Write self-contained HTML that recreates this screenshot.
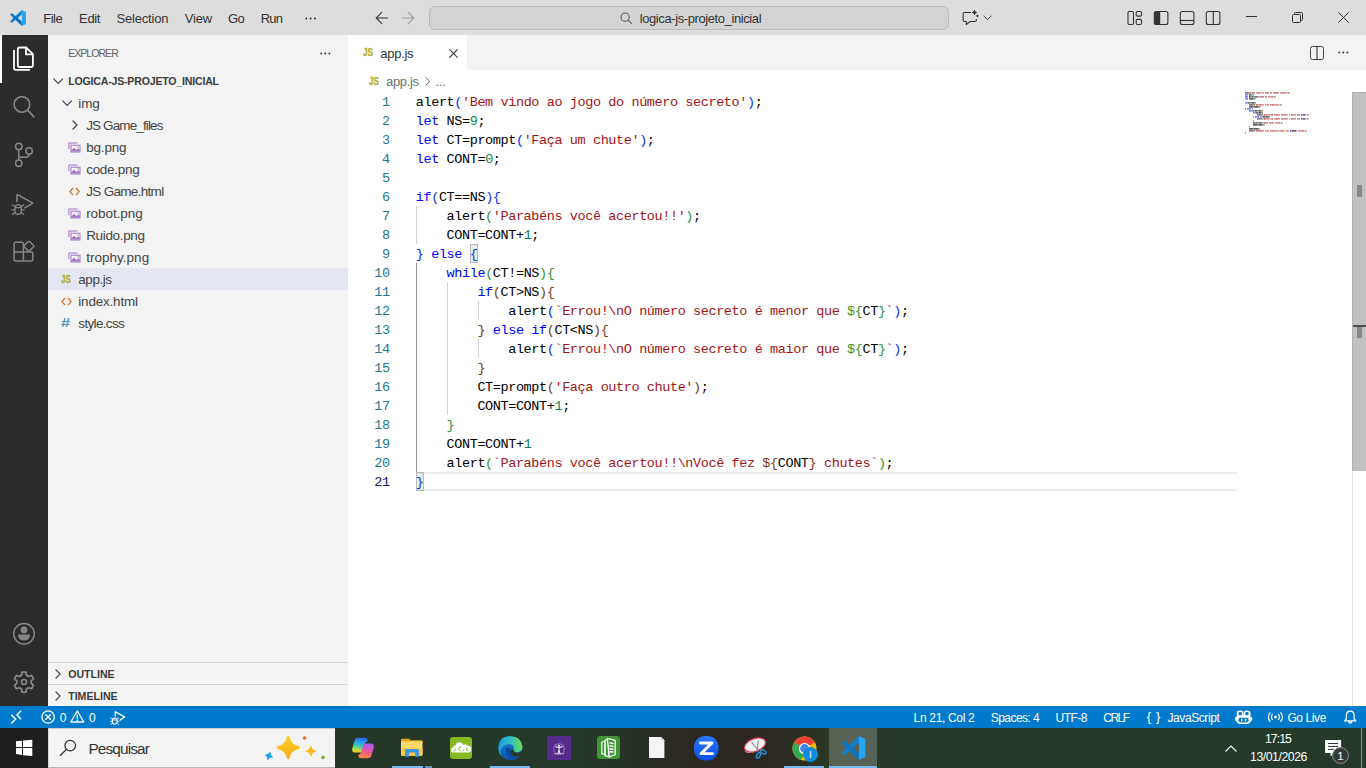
<!DOCTYPE html>
<html lang="pt-BR">
<head>
<meta charset="utf-8">
<title>app.js - logica-js-projeto_inicial - Visual Studio Code</title>
<style>
*{box-sizing:border-box;margin:0;padding:0}
html,body{width:1366px;height:768px;overflow:hidden;background:#fff}
body{position:relative;font-family:"Liberation Sans","DejaVu Sans",sans-serif;font-size:12.5px;color:#333;-webkit-font-smoothing:antialiased}
.abs{position:absolute}
.t{position:absolute;white-space:pre;line-height:20px;height:20px}
#title{left:0;top:0;width:1366px;height:35px;background:#dddddd}
#act{left:0;top:35px;width:48px;height:671px;background:#2c2c2c}
#side{left:48px;top:35px;width:300px;height:671px;background:#f3f3f3}
#tabs{left:348px;top:35px;width:1018px;height:35px;background:#f3f3f3}
#tab{left:348px;top:35px;width:119px;height:35px;background:#fff}
#status{left:0;top:706px;width:1366px;height:22px;background:#007acc}
#task{left:0;top:728px;width:1366px;height:40px;background:linear-gradient(90deg,#25382a 0,#263928 420px,#26382a 590px,#273025 640px,#2b2922 685px,#2d2621 745px,#2b2c22 790px,#2a3a26 835px,#28392a 880px,#263a29 1000px,#253a2b 1366px)}
.cmd{left:429px;top:6px;width:520px;height:24px;border:1px solid #bdbdbd;border-radius:6px;background:#d3d3d3}
.sel{left:48px;top:268px;width:300px;height:22px;background:#e4e6f1}
.hr{left:48px;width:300px;height:1px;background:#d4d4d4}
.code{position:absolute;left:415.8px;white-space:pre;font-family:"Liberation Mono","DejaVu Sans Mono",monospace;font-size:13.5px;letter-spacing:-0.4px;line-height:19px;height:19px;color:#000;margin-top:0.6px}
.ln{position:absolute;left:348px;width:41.6px;text-align:right;font-family:"Liberation Mono","DejaVu Sans Mono",monospace;font-size:13.5px;letter-spacing:-0.4px;line-height:19px;height:19px;color:#237893;margin-top:0.6px}
.k{color:#0000ff}.s{color:#a31515}.n{color:#098658}
.b1{color:#0431fa}.b2{color:#319331}.b3{color:#7b3814}
.g{position:absolute;width:1px;background:#d3d3d3}
.ga{background:#939393}
.bm{position:absolute;width:8px;height:19px;border:1px solid #b9b9b9;background:rgba(0,100,0,0.1)}
svg{position:absolute;overflow:visible}
</style>
</head>
<body>
<div class="abs" id="title"></div>
<div class="abs cmd"></div>
<div class="abs" id="act"></div>
<div class="abs" style="left:0;top:35px;width:2px;height:48px;background:#fff"></div>
<div class="abs" id="side"></div>
<div class="abs sel"></div>
<div class="abs hr" style="top:662px"></div>
<div class="abs hr" style="top:684px"></div>
<div class="abs" id="tabs"></div>
<div class="abs" id="tab"></div>
<div class="abs" style="left:416px;top:472px;width:821px;height:19px;border-top:2px solid #eeeeee;border-bottom:2px solid #eeeeee"></div>
<div class="bm" style="left:469.9px;top:244px"></div>
<div class="bm" style="left:416.0px;top:472px"></div>
<div class="g" style="left:416.0px;top:206px;height:38px"></div>
<div class="g ga" style="left:416.0px;top:263px;height:209px"></div>
<div class="g" style="left:446.8px;top:282px;height:133px"></div>
<div class="g" style="left:477.6px;top:301px;height:19px"></div>
<div class="g" style="left:477.6px;top:339px;height:19px"></div>
<div class="ln" style="top:92px">1</div>
<div class="code" style="top:92px">alert<span class="b1">(</span><span class="s">&#x27;Bem vindo ao jogo do número secreto&#x27;</span><span class="b1">)</span>;</div>
<div class="ln" style="top:111px">2</div>
<div class="code" style="top:111px"><span class="k">let</span> NS=<span class="n">9</span>;</div>
<div class="ln" style="top:130px">3</div>
<div class="code" style="top:130px"><span class="k">let</span> CT=prompt<span class="b1">(</span><span class="s">&#x27;Faça um chute&#x27;</span><span class="b1">)</span>;</div>
<div class="ln" style="top:149px">4</div>
<div class="code" style="top:149px"><span class="k">let</span> CONT=<span class="n">0</span>;</div>
<div class="ln" style="top:168px">5</div>
<div class="ln" style="top:187px">6</div>
<div class="code" style="top:187px"><span class="k">if</span><span class="b1">(</span>CT==NS<span class="b1">)</span><span class="b1">{</span></div>
<div class="ln" style="top:206px">7</div>
<div class="code" style="top:206px">    alert<span class="b2">(</span><span class="s">&#x27;Parabéns você acertou!!&#x27;</span><span class="b2">)</span>;</div>
<div class="ln" style="top:225px">8</div>
<div class="code" style="top:225px">    CONT=CONT+<span class="n">1</span>;</div>
<div class="ln" style="top:244px">9</div>
<div class="code" style="top:244px"><span class="b1">}</span> <span class="k">else</span> <span class="b1">{</span></div>
<div class="ln" style="top:263px">10</div>
<div class="code" style="top:263px">    <span class="k">while</span><span class="b2">(</span>CT!=NS<span class="b2">)</span><span class="b2">{</span></div>
<div class="ln" style="top:282px">11</div>
<div class="code" style="top:282px">        <span class="k">if</span><span class="b3">(</span>CT&gt;NS<span class="b3">)</span><span class="b3">{</span></div>
<div class="ln" style="top:301px">12</div>
<div class="code" style="top:301px">            alert<span class="b1">(</span><span class="s">`Errou!\nO número secreto é menor que </span><span class="b2">${</span>CT<span class="b2">}</span><span class="s">`</span><span class="b1">)</span>;</div>
<div class="ln" style="top:320px">13</div>
<div class="code" style="top:320px">        <span class="b3">}</span> <span class="k">else</span> <span class="k">if</span><span class="b3">(</span>CT&lt;NS<span class="b3">)</span><span class="b3">{</span></div>
<div class="ln" style="top:339px">14</div>
<div class="code" style="top:339px">            alert<span class="b1">(</span><span class="s">`Errou!\nO número secreto é maior que </span><span class="b2">${</span>CT<span class="b2">}</span><span class="s">`</span><span class="b1">)</span>;</div>
<div class="ln" style="top:358px">15</div>
<div class="code" style="top:358px">        <span class="b3">}</span></div>
<div class="ln" style="top:377px">16</div>
<div class="code" style="top:377px">        CT=prompt<span class="b3">(</span><span class="s">&#x27;Faça outro chute&#x27;</span><span class="b3">)</span>;</div>
<div class="ln" style="top:396px">17</div>
<div class="code" style="top:396px">        CONT=CONT+<span class="n">1</span>;</div>
<div class="ln" style="top:415px">18</div>
<div class="code" style="top:415px">    <span class="b2">}</span></div>
<div class="ln" style="top:434px">19</div>
<div class="code" style="top:434px">    CONT=CONT+<span class="n">1</span></div>
<div class="ln" style="top:453px">20</div>
<div class="code" style="top:453px">    alert<span class="b2">(</span><span class="s">`Parabéns você acertou!!\nVocê fez </span><span class="b3">${</span>CONT<span class="b3">}</span><span class="s"> chutes`</span><span class="b2">)</span>;</div>
<div class="ln" style="top:472px;color:#0b216f">21</div>
<div class="code" style="top:472px"><span class="b1">}</span></div>
<svg style="left:1245px;top:92px" width="70" height="44" viewBox="0 0 70 44" shape-rendering="crispEdges"><rect x="0" y="0" width="1" height="1" fill="#000000" opacity="0.56"/><rect x="0" y="1" width="1" height="1" fill="#000000" opacity="0.39"/><rect x="1" y="0" width="1" height="1" fill="#000000" opacity="0.44"/><rect x="1" y="1" width="1" height="1" fill="#000000" opacity="0.30"/><rect x="2" y="0" width="1" height="1" fill="#000000" opacity="0.56"/><rect x="2" y="1" width="1" height="1" fill="#000000" opacity="0.39"/><rect x="3" y="0" width="1" height="1" fill="#000000" opacity="0.44"/><rect x="3" y="1" width="1" height="1" fill="#000000" opacity="0.30"/><rect x="4" y="0" width="1" height="1" fill="#000000" opacity="0.44"/><rect x="4" y="1" width="1" height="1" fill="#000000" opacity="0.30"/><rect x="5" y="0" width="1" height="1" fill="#000000" opacity="0.40"/><rect x="5" y="1" width="1" height="1" fill="#000000" opacity="0.28"/><rect x="6" y="0" width="1" height="1" fill="#a31515" opacity="0.24"/><rect x="6" y="1" width="1" height="1" fill="#a31515" opacity="0.17"/><rect x="7" y="0" width="1" height="1" fill="#a31515" opacity="0.68"/><rect x="7" y="1" width="1" height="1" fill="#a31515" opacity="0.47"/><rect x="8" y="0" width="1" height="1" fill="#a31515" opacity="0.56"/><rect x="8" y="1" width="1" height="1" fill="#a31515" opacity="0.39"/><rect x="9" y="0" width="1" height="1" fill="#a31515" opacity="0.56"/><rect x="9" y="1" width="1" height="1" fill="#a31515" opacity="0.39"/><rect x="11" y="0" width="1" height="1" fill="#a31515" opacity="0.44"/><rect x="11" y="1" width="1" height="1" fill="#a31515" opacity="0.30"/><rect x="12" y="0" width="1" height="1" fill="#a31515" opacity="0.44"/><rect x="12" y="1" width="1" height="1" fill="#a31515" opacity="0.30"/><rect x="13" y="0" width="1" height="1" fill="#a31515" opacity="0.44"/><rect x="13" y="1" width="1" height="1" fill="#a31515" opacity="0.30"/><rect x="14" y="0" width="1" height="1" fill="#a31515" opacity="0.56"/><rect x="14" y="1" width="1" height="1" fill="#a31515" opacity="0.39"/><rect x="15" y="0" width="1" height="1" fill="#a31515" opacity="0.44"/><rect x="15" y="1" width="1" height="1" fill="#a31515" opacity="0.30"/><rect x="17" y="0" width="1" height="1" fill="#a31515" opacity="0.56"/><rect x="17" y="1" width="1" height="1" fill="#a31515" opacity="0.39"/><rect x="18" y="0" width="1" height="1" fill="#a31515" opacity="0.44"/><rect x="18" y="1" width="1" height="1" fill="#a31515" opacity="0.30"/><rect x="20" y="0" width="1" height="1" fill="#a31515" opacity="0.44"/><rect x="20" y="1" width="1" height="1" fill="#a31515" opacity="0.30"/><rect x="21" y="0" width="1" height="1" fill="#a31515" opacity="0.44"/><rect x="21" y="1" width="1" height="1" fill="#a31515" opacity="0.30"/><rect x="22" y="0" width="1" height="1" fill="#a31515" opacity="0.56"/><rect x="22" y="1" width="1" height="1" fill="#a31515" opacity="0.39"/><rect x="23" y="0" width="1" height="1" fill="#a31515" opacity="0.44"/><rect x="23" y="1" width="1" height="1" fill="#a31515" opacity="0.30"/><rect x="25" y="0" width="1" height="1" fill="#a31515" opacity="0.56"/><rect x="25" y="1" width="1" height="1" fill="#a31515" opacity="0.39"/><rect x="26" y="0" width="1" height="1" fill="#a31515" opacity="0.44"/><rect x="26" y="1" width="1" height="1" fill="#a31515" opacity="0.30"/><rect x="28" y="0" width="1" height="1" fill="#a31515" opacity="0.44"/><rect x="28" y="1" width="1" height="1" fill="#a31515" opacity="0.30"/><rect x="29" y="0" width="1" height="1" fill="#a31515" opacity="0.44"/><rect x="29" y="1" width="1" height="1" fill="#a31515" opacity="0.30"/><rect x="30" y="0" width="1" height="1" fill="#a31515" opacity="0.56"/><rect x="30" y="1" width="1" height="1" fill="#a31515" opacity="0.39"/><rect x="31" y="0" width="1" height="1" fill="#a31515" opacity="0.56"/><rect x="31" y="1" width="1" height="1" fill="#a31515" opacity="0.39"/><rect x="32" y="0" width="1" height="1" fill="#a31515" opacity="0.44"/><rect x="32" y="1" width="1" height="1" fill="#a31515" opacity="0.30"/><rect x="33" y="0" width="1" height="1" fill="#a31515" opacity="0.44"/><rect x="33" y="1" width="1" height="1" fill="#a31515" opacity="0.30"/><rect x="35" y="0" width="1" height="1" fill="#a31515" opacity="0.44"/><rect x="35" y="1" width="1" height="1" fill="#a31515" opacity="0.30"/><rect x="36" y="0" width="1" height="1" fill="#a31515" opacity="0.56"/><rect x="36" y="1" width="1" height="1" fill="#a31515" opacity="0.39"/><rect x="37" y="0" width="1" height="1" fill="#a31515" opacity="0.44"/><rect x="37" y="1" width="1" height="1" fill="#a31515" opacity="0.30"/><rect x="38" y="0" width="1" height="1" fill="#a31515" opacity="0.44"/><rect x="38" y="1" width="1" height="1" fill="#a31515" opacity="0.30"/><rect x="39" y="0" width="1" height="1" fill="#a31515" opacity="0.56"/><rect x="39" y="1" width="1" height="1" fill="#a31515" opacity="0.39"/><rect x="40" y="0" width="1" height="1" fill="#a31515" opacity="0.44"/><rect x="40" y="1" width="1" height="1" fill="#a31515" opacity="0.30"/><rect x="41" y="0" width="1" height="1" fill="#a31515" opacity="0.44"/><rect x="41" y="1" width="1" height="1" fill="#a31515" opacity="0.30"/><rect x="42" y="0" width="1" height="1" fill="#a31515" opacity="0.24"/><rect x="42" y="1" width="1" height="1" fill="#a31515" opacity="0.17"/><rect x="43" y="0" width="1" height="1" fill="#000000" opacity="0.40"/><rect x="43" y="1" width="1" height="1" fill="#000000" opacity="0.28"/><rect x="44" y="0" width="1" height="1" fill="#000000" opacity="0.24"/><rect x="44" y="1" width="1" height="1" fill="#000000" opacity="0.17"/><rect x="0" y="2" width="1" height="1" fill="#0000ff" opacity="0.44"/><rect x="0" y="3" width="1" height="1" fill="#0000ff" opacity="0.30"/><rect x="1" y="2" width="1" height="1" fill="#0000ff" opacity="0.56"/><rect x="1" y="3" width="1" height="1" fill="#0000ff" opacity="0.39"/><rect x="2" y="2" width="1" height="1" fill="#0000ff" opacity="0.44"/><rect x="2" y="3" width="1" height="1" fill="#0000ff" opacity="0.30"/><rect x="4" y="2" width="1" height="1" fill="#000000" opacity="0.68"/><rect x="4" y="3" width="1" height="1" fill="#000000" opacity="0.47"/><rect x="5" y="2" width="1" height="1" fill="#000000" opacity="0.60"/><rect x="5" y="3" width="1" height="1" fill="#000000" opacity="0.41"/><rect x="6" y="2" width="1" height="1" fill="#000000" opacity="0.40"/><rect x="6" y="3" width="1" height="1" fill="#000000" opacity="0.28"/><rect x="7" y="2" width="1" height="1" fill="#098658" opacity="0.60"/><rect x="7" y="3" width="1" height="1" fill="#098658" opacity="0.41"/><rect x="8" y="2" width="1" height="1" fill="#000000" opacity="0.24"/><rect x="8" y="3" width="1" height="1" fill="#000000" opacity="0.17"/><rect x="0" y="4" width="1" height="1" fill="#0000ff" opacity="0.44"/><rect x="0" y="5" width="1" height="1" fill="#0000ff" opacity="0.30"/><rect x="1" y="4" width="1" height="1" fill="#0000ff" opacity="0.56"/><rect x="1" y="5" width="1" height="1" fill="#0000ff" opacity="0.39"/><rect x="2" y="4" width="1" height="1" fill="#0000ff" opacity="0.44"/><rect x="2" y="5" width="1" height="1" fill="#0000ff" opacity="0.30"/><rect x="4" y="4" width="1" height="1" fill="#000000" opacity="0.60"/><rect x="4" y="5" width="1" height="1" fill="#000000" opacity="0.41"/><rect x="5" y="4" width="1" height="1" fill="#000000" opacity="0.60"/><rect x="5" y="5" width="1" height="1" fill="#000000" opacity="0.41"/><rect x="6" y="4" width="1" height="1" fill="#000000" opacity="0.40"/><rect x="6" y="5" width="1" height="1" fill="#000000" opacity="0.28"/><rect x="7" y="4" width="1" height="1" fill="#000000" opacity="0.56"/><rect x="7" y="5" width="1" height="1" fill="#000000" opacity="0.39"/><rect x="8" y="4" width="1" height="1" fill="#000000" opacity="0.44"/><rect x="8" y="5" width="1" height="1" fill="#000000" opacity="0.30"/><rect x="9" y="4" width="1" height="1" fill="#000000" opacity="0.44"/><rect x="9" y="5" width="1" height="1" fill="#000000" opacity="0.30"/><rect x="10" y="4" width="1" height="1" fill="#000000" opacity="0.56"/><rect x="10" y="5" width="1" height="1" fill="#000000" opacity="0.39"/><rect x="11" y="4" width="1" height="1" fill="#000000" opacity="0.56"/><rect x="11" y="5" width="1" height="1" fill="#000000" opacity="0.39"/><rect x="12" y="4" width="1" height="1" fill="#000000" opacity="0.44"/><rect x="12" y="5" width="1" height="1" fill="#000000" opacity="0.30"/><rect x="13" y="4" width="1" height="1" fill="#000000" opacity="0.40"/><rect x="13" y="5" width="1" height="1" fill="#000000" opacity="0.28"/><rect x="14" y="4" width="1" height="1" fill="#a31515" opacity="0.24"/><rect x="14" y="5" width="1" height="1" fill="#a31515" opacity="0.17"/><rect x="15" y="4" width="1" height="1" fill="#a31515" opacity="0.60"/><rect x="15" y="5" width="1" height="1" fill="#a31515" opacity="0.41"/><rect x="16" y="4" width="1" height="1" fill="#a31515" opacity="0.56"/><rect x="16" y="5" width="1" height="1" fill="#a31515" opacity="0.39"/><rect x="17" y="4" width="1" height="1" fill="#a31515" opacity="0.44"/><rect x="17" y="5" width="1" height="1" fill="#a31515" opacity="0.30"/><rect x="18" y="4" width="1" height="1" fill="#a31515" opacity="0.56"/><rect x="18" y="5" width="1" height="1" fill="#a31515" opacity="0.39"/><rect x="20" y="4" width="1" height="1" fill="#a31515" opacity="0.44"/><rect x="20" y="5" width="1" height="1" fill="#a31515" opacity="0.30"/><rect x="21" y="4" width="1" height="1" fill="#a31515" opacity="0.56"/><rect x="21" y="5" width="1" height="1" fill="#a31515" opacity="0.39"/><rect x="23" y="4" width="1" height="1" fill="#a31515" opacity="0.44"/><rect x="23" y="5" width="1" height="1" fill="#a31515" opacity="0.30"/><rect x="24" y="4" width="1" height="1" fill="#a31515" opacity="0.44"/><rect x="24" y="5" width="1" height="1" fill="#a31515" opacity="0.30"/><rect x="25" y="4" width="1" height="1" fill="#a31515" opacity="0.44"/><rect x="25" y="5" width="1" height="1" fill="#a31515" opacity="0.30"/><rect x="26" y="4" width="1" height="1" fill="#a31515" opacity="0.44"/><rect x="26" y="5" width="1" height="1" fill="#a31515" opacity="0.30"/><rect x="27" y="4" width="1" height="1" fill="#a31515" opacity="0.56"/><rect x="27" y="5" width="1" height="1" fill="#a31515" opacity="0.39"/><rect x="28" y="4" width="1" height="1" fill="#a31515" opacity="0.24"/><rect x="28" y="5" width="1" height="1" fill="#a31515" opacity="0.17"/><rect x="29" y="4" width="1" height="1" fill="#000000" opacity="0.40"/><rect x="29" y="5" width="1" height="1" fill="#000000" opacity="0.28"/><rect x="30" y="4" width="1" height="1" fill="#000000" opacity="0.24"/><rect x="30" y="5" width="1" height="1" fill="#000000" opacity="0.17"/><rect x="0" y="6" width="1" height="1" fill="#0000ff" opacity="0.44"/><rect x="0" y="7" width="1" height="1" fill="#0000ff" opacity="0.30"/><rect x="1" y="6" width="1" height="1" fill="#0000ff" opacity="0.56"/><rect x="1" y="7" width="1" height="1" fill="#0000ff" opacity="0.39"/><rect x="2" y="6" width="1" height="1" fill="#0000ff" opacity="0.44"/><rect x="2" y="7" width="1" height="1" fill="#0000ff" opacity="0.30"/><rect x="4" y="6" width="1" height="1" fill="#000000" opacity="0.60"/><rect x="4" y="7" width="1" height="1" fill="#000000" opacity="0.41"/><rect x="5" y="6" width="1" height="1" fill="#000000" opacity="0.60"/><rect x="5" y="7" width="1" height="1" fill="#000000" opacity="0.41"/><rect x="6" y="6" width="1" height="1" fill="#000000" opacity="0.68"/><rect x="6" y="7" width="1" height="1" fill="#000000" opacity="0.47"/><rect x="7" y="6" width="1" height="1" fill="#000000" opacity="0.60"/><rect x="7" y="7" width="1" height="1" fill="#000000" opacity="0.41"/><rect x="8" y="6" width="1" height="1" fill="#000000" opacity="0.40"/><rect x="8" y="7" width="1" height="1" fill="#000000" opacity="0.28"/><rect x="9" y="6" width="1" height="1" fill="#098658" opacity="0.68"/><rect x="9" y="7" width="1" height="1" fill="#098658" opacity="0.47"/><rect x="10" y="6" width="1" height="1" fill="#000000" opacity="0.24"/><rect x="10" y="7" width="1" height="1" fill="#000000" opacity="0.17"/><rect x="0" y="10" width="1" height="1" fill="#0000ff" opacity="0.44"/><rect x="0" y="11" width="1" height="1" fill="#0000ff" opacity="0.30"/><rect x="1" y="10" width="1" height="1" fill="#0000ff" opacity="0.44"/><rect x="1" y="11" width="1" height="1" fill="#0000ff" opacity="0.30"/><rect x="2" y="10" width="1" height="1" fill="#000000" opacity="0.40"/><rect x="2" y="11" width="1" height="1" fill="#000000" opacity="0.28"/><rect x="3" y="10" width="1" height="1" fill="#000000" opacity="0.60"/><rect x="3" y="11" width="1" height="1" fill="#000000" opacity="0.41"/><rect x="4" y="10" width="1" height="1" fill="#000000" opacity="0.60"/><rect x="4" y="11" width="1" height="1" fill="#000000" opacity="0.41"/><rect x="5" y="10" width="1" height="1" fill="#000000" opacity="0.40"/><rect x="5" y="11" width="1" height="1" fill="#000000" opacity="0.28"/><rect x="6" y="10" width="1" height="1" fill="#000000" opacity="0.40"/><rect x="6" y="11" width="1" height="1" fill="#000000" opacity="0.28"/><rect x="7" y="10" width="1" height="1" fill="#000000" opacity="0.68"/><rect x="7" y="11" width="1" height="1" fill="#000000" opacity="0.47"/><rect x="8" y="10" width="1" height="1" fill="#000000" opacity="0.60"/><rect x="8" y="11" width="1" height="1" fill="#000000" opacity="0.41"/><rect x="9" y="10" width="1" height="1" fill="#000000" opacity="0.40"/><rect x="9" y="11" width="1" height="1" fill="#000000" opacity="0.28"/><rect x="10" y="10" width="1" height="1" fill="#000000" opacity="0.40"/><rect x="10" y="11" width="1" height="1" fill="#000000" opacity="0.28"/><rect x="4" y="12" width="1" height="1" fill="#000000" opacity="0.56"/><rect x="4" y="13" width="1" height="1" fill="#000000" opacity="0.39"/><rect x="5" y="12" width="1" height="1" fill="#000000" opacity="0.44"/><rect x="5" y="13" width="1" height="1" fill="#000000" opacity="0.30"/><rect x="6" y="12" width="1" height="1" fill="#000000" opacity="0.56"/><rect x="6" y="13" width="1" height="1" fill="#000000" opacity="0.39"/><rect x="7" y="12" width="1" height="1" fill="#000000" opacity="0.44"/><rect x="7" y="13" width="1" height="1" fill="#000000" opacity="0.30"/><rect x="8" y="12" width="1" height="1" fill="#000000" opacity="0.44"/><rect x="8" y="13" width="1" height="1" fill="#000000" opacity="0.30"/><rect x="9" y="12" width="1" height="1" fill="#000000" opacity="0.40"/><rect x="9" y="13" width="1" height="1" fill="#000000" opacity="0.28"/><rect x="10" y="12" width="1" height="1" fill="#a31515" opacity="0.24"/><rect x="10" y="13" width="1" height="1" fill="#a31515" opacity="0.17"/><rect x="11" y="12" width="1" height="1" fill="#a31515" opacity="0.60"/><rect x="11" y="13" width="1" height="1" fill="#a31515" opacity="0.41"/><rect x="12" y="12" width="1" height="1" fill="#a31515" opacity="0.56"/><rect x="12" y="13" width="1" height="1" fill="#a31515" opacity="0.39"/><rect x="13" y="12" width="1" height="1" fill="#a31515" opacity="0.44"/><rect x="13" y="13" width="1" height="1" fill="#a31515" opacity="0.30"/><rect x="14" y="12" width="1" height="1" fill="#a31515" opacity="0.56"/><rect x="14" y="13" width="1" height="1" fill="#a31515" opacity="0.39"/><rect x="15" y="12" width="1" height="1" fill="#a31515" opacity="0.56"/><rect x="15" y="13" width="1" height="1" fill="#a31515" opacity="0.39"/><rect x="16" y="12" width="1" height="1" fill="#a31515" opacity="0.44"/><rect x="16" y="13" width="1" height="1" fill="#a31515" opacity="0.30"/><rect x="17" y="12" width="1" height="1" fill="#a31515" opacity="0.44"/><rect x="17" y="13" width="1" height="1" fill="#a31515" opacity="0.30"/><rect x="18" y="12" width="1" height="1" fill="#a31515" opacity="0.44"/><rect x="18" y="13" width="1" height="1" fill="#a31515" opacity="0.30"/><rect x="20" y="12" width="1" height="1" fill="#a31515" opacity="0.44"/><rect x="20" y="13" width="1" height="1" fill="#a31515" opacity="0.30"/><rect x="21" y="12" width="1" height="1" fill="#a31515" opacity="0.44"/><rect x="21" y="13" width="1" height="1" fill="#a31515" opacity="0.30"/><rect x="22" y="12" width="1" height="1" fill="#a31515" opacity="0.44"/><rect x="22" y="13" width="1" height="1" fill="#a31515" opacity="0.30"/><rect x="23" y="12" width="1" height="1" fill="#a31515" opacity="0.44"/><rect x="23" y="13" width="1" height="1" fill="#a31515" opacity="0.30"/><rect x="25" y="12" width="1" height="1" fill="#a31515" opacity="0.56"/><rect x="25" y="13" width="1" height="1" fill="#a31515" opacity="0.39"/><rect x="26" y="12" width="1" height="1" fill="#a31515" opacity="0.44"/><rect x="26" y="13" width="1" height="1" fill="#a31515" opacity="0.30"/><rect x="27" y="12" width="1" height="1" fill="#a31515" opacity="0.56"/><rect x="27" y="13" width="1" height="1" fill="#a31515" opacity="0.39"/><rect x="28" y="12" width="1" height="1" fill="#a31515" opacity="0.44"/><rect x="28" y="13" width="1" height="1" fill="#a31515" opacity="0.30"/><rect x="29" y="12" width="1" height="1" fill="#a31515" opacity="0.44"/><rect x="29" y="13" width="1" height="1" fill="#a31515" opacity="0.30"/><rect x="30" y="12" width="1" height="1" fill="#a31515" opacity="0.44"/><rect x="30" y="13" width="1" height="1" fill="#a31515" opacity="0.30"/><rect x="31" y="12" width="1" height="1" fill="#a31515" opacity="0.44"/><rect x="31" y="13" width="1" height="1" fill="#a31515" opacity="0.30"/><rect x="32" y="12" width="1" height="1" fill="#a31515" opacity="0.40"/><rect x="32" y="13" width="1" height="1" fill="#a31515" opacity="0.28"/><rect x="33" y="12" width="1" height="1" fill="#a31515" opacity="0.40"/><rect x="33" y="13" width="1" height="1" fill="#a31515" opacity="0.28"/><rect x="34" y="12" width="1" height="1" fill="#a31515" opacity="0.24"/><rect x="34" y="13" width="1" height="1" fill="#a31515" opacity="0.17"/><rect x="35" y="12" width="1" height="1" fill="#000000" opacity="0.40"/><rect x="35" y="13" width="1" height="1" fill="#000000" opacity="0.28"/><rect x="36" y="12" width="1" height="1" fill="#000000" opacity="0.24"/><rect x="36" y="13" width="1" height="1" fill="#000000" opacity="0.17"/><rect x="4" y="14" width="1" height="1" fill="#000000" opacity="0.60"/><rect x="4" y="15" width="1" height="1" fill="#000000" opacity="0.41"/><rect x="5" y="14" width="1" height="1" fill="#000000" opacity="0.60"/><rect x="5" y="15" width="1" height="1" fill="#000000" opacity="0.41"/><rect x="6" y="14" width="1" height="1" fill="#000000" opacity="0.68"/><rect x="6" y="15" width="1" height="1" fill="#000000" opacity="0.47"/><rect x="7" y="14" width="1" height="1" fill="#000000" opacity="0.60"/><rect x="7" y="15" width="1" height="1" fill="#000000" opacity="0.41"/><rect x="8" y="14" width="1" height="1" fill="#000000" opacity="0.40"/><rect x="8" y="15" width="1" height="1" fill="#000000" opacity="0.28"/><rect x="9" y="14" width="1" height="1" fill="#000000" opacity="0.60"/><rect x="9" y="15" width="1" height="1" fill="#000000" opacity="0.41"/><rect x="10" y="14" width="1" height="1" fill="#000000" opacity="0.60"/><rect x="10" y="15" width="1" height="1" fill="#000000" opacity="0.41"/><rect x="11" y="14" width="1" height="1" fill="#000000" opacity="0.68"/><rect x="11" y="15" width="1" height="1" fill="#000000" opacity="0.47"/><rect x="12" y="14" width="1" height="1" fill="#000000" opacity="0.60"/><rect x="12" y="15" width="1" height="1" fill="#000000" opacity="0.41"/><rect x="13" y="14" width="1" height="1" fill="#000000" opacity="0.40"/><rect x="13" y="15" width="1" height="1" fill="#000000" opacity="0.28"/><rect x="14" y="14" width="1" height="1" fill="#098658" opacity="0.60"/><rect x="14" y="15" width="1" height="1" fill="#098658" opacity="0.41"/><rect x="15" y="14" width="1" height="1" fill="#000000" opacity="0.24"/><rect x="15" y="15" width="1" height="1" fill="#000000" opacity="0.17"/><rect x="0" y="16" width="1" height="1" fill="#000000" opacity="0.40"/><rect x="0" y="17" width="1" height="1" fill="#000000" opacity="0.28"/><rect x="2" y="16" width="1" height="1" fill="#0000ff" opacity="0.56"/><rect x="2" y="17" width="1" height="1" fill="#0000ff" opacity="0.39"/><rect x="3" y="16" width="1" height="1" fill="#0000ff" opacity="0.44"/><rect x="3" y="17" width="1" height="1" fill="#0000ff" opacity="0.30"/><rect x="4" y="16" width="1" height="1" fill="#0000ff" opacity="0.44"/><rect x="4" y="17" width="1" height="1" fill="#0000ff" opacity="0.30"/><rect x="5" y="16" width="1" height="1" fill="#0000ff" opacity="0.56"/><rect x="5" y="17" width="1" height="1" fill="#0000ff" opacity="0.39"/><rect x="7" y="16" width="1" height="1" fill="#000000" opacity="0.40"/><rect x="7" y="17" width="1" height="1" fill="#000000" opacity="0.28"/><rect x="4" y="18" width="1" height="1" fill="#0000ff" opacity="0.56"/><rect x="4" y="19" width="1" height="1" fill="#0000ff" opacity="0.39"/><rect x="5" y="18" width="1" height="1" fill="#0000ff" opacity="0.44"/><rect x="5" y="19" width="1" height="1" fill="#0000ff" opacity="0.30"/><rect x="6" y="18" width="1" height="1" fill="#0000ff" opacity="0.44"/><rect x="6" y="19" width="1" height="1" fill="#0000ff" opacity="0.30"/><rect x="7" y="18" width="1" height="1" fill="#0000ff" opacity="0.44"/><rect x="7" y="19" width="1" height="1" fill="#0000ff" opacity="0.30"/><rect x="8" y="18" width="1" height="1" fill="#0000ff" opacity="0.56"/><rect x="8" y="19" width="1" height="1" fill="#0000ff" opacity="0.39"/><rect x="9" y="18" width="1" height="1" fill="#000000" opacity="0.40"/><rect x="9" y="19" width="1" height="1" fill="#000000" opacity="0.28"/><rect x="10" y="18" width="1" height="1" fill="#000000" opacity="0.60"/><rect x="10" y="19" width="1" height="1" fill="#000000" opacity="0.41"/><rect x="11" y="18" width="1" height="1" fill="#000000" opacity="0.60"/><rect x="11" y="19" width="1" height="1" fill="#000000" opacity="0.41"/><rect x="12" y="18" width="1" height="1" fill="#000000" opacity="0.40"/><rect x="12" y="19" width="1" height="1" fill="#000000" opacity="0.28"/><rect x="13" y="18" width="1" height="1" fill="#000000" opacity="0.40"/><rect x="13" y="19" width="1" height="1" fill="#000000" opacity="0.28"/><rect x="14" y="18" width="1" height="1" fill="#000000" opacity="0.68"/><rect x="14" y="19" width="1" height="1" fill="#000000" opacity="0.47"/><rect x="15" y="18" width="1" height="1" fill="#000000" opacity="0.60"/><rect x="15" y="19" width="1" height="1" fill="#000000" opacity="0.41"/><rect x="16" y="18" width="1" height="1" fill="#000000" opacity="0.40"/><rect x="16" y="19" width="1" height="1" fill="#000000" opacity="0.28"/><rect x="17" y="18" width="1" height="1" fill="#000000" opacity="0.40"/><rect x="17" y="19" width="1" height="1" fill="#000000" opacity="0.28"/><rect x="8" y="20" width="1" height="1" fill="#0000ff" opacity="0.44"/><rect x="8" y="21" width="1" height="1" fill="#0000ff" opacity="0.30"/><rect x="9" y="20" width="1" height="1" fill="#0000ff" opacity="0.44"/><rect x="9" y="21" width="1" height="1" fill="#0000ff" opacity="0.30"/><rect x="10" y="20" width="1" height="1" fill="#000000" opacity="0.40"/><rect x="10" y="21" width="1" height="1" fill="#000000" opacity="0.28"/><rect x="11" y="20" width="1" height="1" fill="#000000" opacity="0.60"/><rect x="11" y="21" width="1" height="1" fill="#000000" opacity="0.41"/><rect x="12" y="20" width="1" height="1" fill="#000000" opacity="0.60"/><rect x="12" y="21" width="1" height="1" fill="#000000" opacity="0.41"/><rect x="13" y="20" width="1" height="1" fill="#000000" opacity="0.40"/><rect x="13" y="21" width="1" height="1" fill="#000000" opacity="0.28"/><rect x="14" y="20" width="1" height="1" fill="#000000" opacity="0.68"/><rect x="14" y="21" width="1" height="1" fill="#000000" opacity="0.47"/><rect x="15" y="20" width="1" height="1" fill="#000000" opacity="0.60"/><rect x="15" y="21" width="1" height="1" fill="#000000" opacity="0.41"/><rect x="16" y="20" width="1" height="1" fill="#000000" opacity="0.40"/><rect x="16" y="21" width="1" height="1" fill="#000000" opacity="0.28"/><rect x="17" y="20" width="1" height="1" fill="#000000" opacity="0.40"/><rect x="17" y="21" width="1" height="1" fill="#000000" opacity="0.28"/><rect x="12" y="22" width="1" height="1" fill="#000000" opacity="0.56"/><rect x="12" y="23" width="1" height="1" fill="#000000" opacity="0.39"/><rect x="13" y="22" width="1" height="1" fill="#000000" opacity="0.44"/><rect x="13" y="23" width="1" height="1" fill="#000000" opacity="0.30"/><rect x="14" y="22" width="1" height="1" fill="#000000" opacity="0.56"/><rect x="14" y="23" width="1" height="1" fill="#000000" opacity="0.39"/><rect x="15" y="22" width="1" height="1" fill="#000000" opacity="0.44"/><rect x="15" y="23" width="1" height="1" fill="#000000" opacity="0.30"/><rect x="16" y="22" width="1" height="1" fill="#000000" opacity="0.44"/><rect x="16" y="23" width="1" height="1" fill="#000000" opacity="0.30"/><rect x="17" y="22" width="1" height="1" fill="#000000" opacity="0.40"/><rect x="17" y="23" width="1" height="1" fill="#000000" opacity="0.28"/><rect x="18" y="22" width="1" height="1" fill="#a31515" opacity="0.24"/><rect x="18" y="23" width="1" height="1" fill="#a31515" opacity="0.17"/><rect x="19" y="22" width="1" height="1" fill="#a31515" opacity="0.68"/><rect x="19" y="23" width="1" height="1" fill="#a31515" opacity="0.47"/><rect x="20" y="22" width="1" height="1" fill="#a31515" opacity="0.44"/><rect x="20" y="23" width="1" height="1" fill="#a31515" opacity="0.30"/><rect x="21" y="22" width="1" height="1" fill="#a31515" opacity="0.44"/><rect x="21" y="23" width="1" height="1" fill="#a31515" opacity="0.30"/><rect x="22" y="22" width="1" height="1" fill="#a31515" opacity="0.44"/><rect x="22" y="23" width="1" height="1" fill="#a31515" opacity="0.30"/><rect x="23" y="22" width="1" height="1" fill="#a31515" opacity="0.44"/><rect x="23" y="23" width="1" height="1" fill="#a31515" opacity="0.30"/><rect x="24" y="22" width="1" height="1" fill="#a31515" opacity="0.40"/><rect x="24" y="23" width="1" height="1" fill="#a31515" opacity="0.28"/><rect x="25" y="22" width="1" height="1" fill="#a31515" opacity="0.24"/><rect x="25" y="23" width="1" height="1" fill="#a31515" opacity="0.17"/><rect x="26" y="22" width="1" height="1" fill="#a31515" opacity="0.44"/><rect x="26" y="23" width="1" height="1" fill="#a31515" opacity="0.30"/><rect x="27" y="22" width="1" height="1" fill="#a31515" opacity="0.60"/><rect x="27" y="23" width="1" height="1" fill="#a31515" opacity="0.41"/><rect x="29" y="22" width="1" height="1" fill="#a31515" opacity="0.44"/><rect x="29" y="23" width="1" height="1" fill="#a31515" opacity="0.30"/><rect x="30" y="22" width="1" height="1" fill="#a31515" opacity="0.44"/><rect x="30" y="23" width="1" height="1" fill="#a31515" opacity="0.30"/><rect x="31" y="22" width="1" height="1" fill="#a31515" opacity="0.56"/><rect x="31" y="23" width="1" height="1" fill="#a31515" opacity="0.39"/><rect x="32" y="22" width="1" height="1" fill="#a31515" opacity="0.56"/><rect x="32" y="23" width="1" height="1" fill="#a31515" opacity="0.39"/><rect x="33" y="22" width="1" height="1" fill="#a31515" opacity="0.44"/><rect x="33" y="23" width="1" height="1" fill="#a31515" opacity="0.30"/><rect x="34" y="22" width="1" height="1" fill="#a31515" opacity="0.44"/><rect x="34" y="23" width="1" height="1" fill="#a31515" opacity="0.30"/><rect x="36" y="22" width="1" height="1" fill="#a31515" opacity="0.44"/><rect x="36" y="23" width="1" height="1" fill="#a31515" opacity="0.30"/><rect x="37" y="22" width="1" height="1" fill="#a31515" opacity="0.56"/><rect x="37" y="23" width="1" height="1" fill="#a31515" opacity="0.39"/><rect x="38" y="22" width="1" height="1" fill="#a31515" opacity="0.44"/><rect x="38" y="23" width="1" height="1" fill="#a31515" opacity="0.30"/><rect x="39" y="22" width="1" height="1" fill="#a31515" opacity="0.44"/><rect x="39" y="23" width="1" height="1" fill="#a31515" opacity="0.30"/><rect x="40" y="22" width="1" height="1" fill="#a31515" opacity="0.56"/><rect x="40" y="23" width="1" height="1" fill="#a31515" opacity="0.39"/><rect x="41" y="22" width="1" height="1" fill="#a31515" opacity="0.44"/><rect x="41" y="23" width="1" height="1" fill="#a31515" opacity="0.30"/><rect x="42" y="22" width="1" height="1" fill="#a31515" opacity="0.44"/><rect x="42" y="23" width="1" height="1" fill="#a31515" opacity="0.30"/><rect x="44" y="22" width="1" height="1" fill="#a31515" opacity="0.44"/><rect x="44" y="23" width="1" height="1" fill="#a31515" opacity="0.30"/><rect x="46" y="22" width="1" height="1" fill="#a31515" opacity="0.56"/><rect x="46" y="23" width="1" height="1" fill="#a31515" opacity="0.39"/><rect x="47" y="22" width="1" height="1" fill="#a31515" opacity="0.56"/><rect x="47" y="23" width="1" height="1" fill="#a31515" opacity="0.39"/><rect x="48" y="22" width="1" height="1" fill="#a31515" opacity="0.44"/><rect x="48" y="23" width="1" height="1" fill="#a31515" opacity="0.30"/><rect x="49" y="22" width="1" height="1" fill="#a31515" opacity="0.44"/><rect x="49" y="23" width="1" height="1" fill="#a31515" opacity="0.30"/><rect x="50" y="22" width="1" height="1" fill="#a31515" opacity="0.44"/><rect x="50" y="23" width="1" height="1" fill="#a31515" opacity="0.30"/><rect x="52" y="22" width="1" height="1" fill="#a31515" opacity="0.56"/><rect x="52" y="23" width="1" height="1" fill="#a31515" opacity="0.39"/><rect x="53" y="22" width="1" height="1" fill="#a31515" opacity="0.44"/><rect x="53" y="23" width="1" height="1" fill="#a31515" opacity="0.30"/><rect x="54" y="22" width="1" height="1" fill="#a31515" opacity="0.56"/><rect x="54" y="23" width="1" height="1" fill="#a31515" opacity="0.39"/><rect x="56" y="22" width="1" height="1" fill="#0000ff" opacity="0.68"/><rect x="56" y="23" width="1" height="1" fill="#0000ff" opacity="0.47"/><rect x="57" y="22" width="1" height="1" fill="#0000ff" opacity="0.40"/><rect x="57" y="23" width="1" height="1" fill="#0000ff" opacity="0.28"/><rect x="58" y="22" width="1" height="1" fill="#000000" opacity="0.60"/><rect x="58" y="23" width="1" height="1" fill="#000000" opacity="0.41"/><rect x="59" y="22" width="1" height="1" fill="#000000" opacity="0.60"/><rect x="59" y="23" width="1" height="1" fill="#000000" opacity="0.41"/><rect x="60" y="22" width="1" height="1" fill="#0000ff" opacity="0.40"/><rect x="60" y="23" width="1" height="1" fill="#0000ff" opacity="0.28"/><rect x="61" y="22" width="1" height="1" fill="#a31515" opacity="0.24"/><rect x="61" y="23" width="1" height="1" fill="#a31515" opacity="0.17"/><rect x="62" y="22" width="1" height="1" fill="#000000" opacity="0.40"/><rect x="62" y="23" width="1" height="1" fill="#000000" opacity="0.28"/><rect x="63" y="22" width="1" height="1" fill="#000000" opacity="0.24"/><rect x="63" y="23" width="1" height="1" fill="#000000" opacity="0.17"/><rect x="8" y="24" width="1" height="1" fill="#000000" opacity="0.40"/><rect x="8" y="25" width="1" height="1" fill="#000000" opacity="0.28"/><rect x="10" y="24" width="1" height="1" fill="#0000ff" opacity="0.56"/><rect x="10" y="25" width="1" height="1" fill="#0000ff" opacity="0.39"/><rect x="11" y="24" width="1" height="1" fill="#0000ff" opacity="0.44"/><rect x="11" y="25" width="1" height="1" fill="#0000ff" opacity="0.30"/><rect x="12" y="24" width="1" height="1" fill="#0000ff" opacity="0.44"/><rect x="12" y="25" width="1" height="1" fill="#0000ff" opacity="0.30"/><rect x="13" y="24" width="1" height="1" fill="#0000ff" opacity="0.56"/><rect x="13" y="25" width="1" height="1" fill="#0000ff" opacity="0.39"/><rect x="15" y="24" width="1" height="1" fill="#0000ff" opacity="0.44"/><rect x="15" y="25" width="1" height="1" fill="#0000ff" opacity="0.30"/><rect x="16" y="24" width="1" height="1" fill="#0000ff" opacity="0.44"/><rect x="16" y="25" width="1" height="1" fill="#0000ff" opacity="0.30"/><rect x="17" y="24" width="1" height="1" fill="#000000" opacity="0.40"/><rect x="17" y="25" width="1" height="1" fill="#000000" opacity="0.28"/><rect x="18" y="24" width="1" height="1" fill="#000000" opacity="0.60"/><rect x="18" y="25" width="1" height="1" fill="#000000" opacity="0.41"/><rect x="19" y="24" width="1" height="1" fill="#000000" opacity="0.60"/><rect x="19" y="25" width="1" height="1" fill="#000000" opacity="0.41"/><rect x="20" y="24" width="1" height="1" fill="#000000" opacity="0.40"/><rect x="20" y="25" width="1" height="1" fill="#000000" opacity="0.28"/><rect x="21" y="24" width="1" height="1" fill="#000000" opacity="0.68"/><rect x="21" y="25" width="1" height="1" fill="#000000" opacity="0.47"/><rect x="22" y="24" width="1" height="1" fill="#000000" opacity="0.60"/><rect x="22" y="25" width="1" height="1" fill="#000000" opacity="0.41"/><rect x="23" y="24" width="1" height="1" fill="#000000" opacity="0.40"/><rect x="23" y="25" width="1" height="1" fill="#000000" opacity="0.28"/><rect x="24" y="24" width="1" height="1" fill="#000000" opacity="0.40"/><rect x="24" y="25" width="1" height="1" fill="#000000" opacity="0.28"/><rect x="12" y="26" width="1" height="1" fill="#000000" opacity="0.56"/><rect x="12" y="27" width="1" height="1" fill="#000000" opacity="0.39"/><rect x="13" y="26" width="1" height="1" fill="#000000" opacity="0.44"/><rect x="13" y="27" width="1" height="1" fill="#000000" opacity="0.30"/><rect x="14" y="26" width="1" height="1" fill="#000000" opacity="0.56"/><rect x="14" y="27" width="1" height="1" fill="#000000" opacity="0.39"/><rect x="15" y="26" width="1" height="1" fill="#000000" opacity="0.44"/><rect x="15" y="27" width="1" height="1" fill="#000000" opacity="0.30"/><rect x="16" y="26" width="1" height="1" fill="#000000" opacity="0.44"/><rect x="16" y="27" width="1" height="1" fill="#000000" opacity="0.30"/><rect x="17" y="26" width="1" height="1" fill="#000000" opacity="0.40"/><rect x="17" y="27" width="1" height="1" fill="#000000" opacity="0.28"/><rect x="18" y="26" width="1" height="1" fill="#a31515" opacity="0.24"/><rect x="18" y="27" width="1" height="1" fill="#a31515" opacity="0.17"/><rect x="19" y="26" width="1" height="1" fill="#a31515" opacity="0.68"/><rect x="19" y="27" width="1" height="1" fill="#a31515" opacity="0.47"/><rect x="20" y="26" width="1" height="1" fill="#a31515" opacity="0.44"/><rect x="20" y="27" width="1" height="1" fill="#a31515" opacity="0.30"/><rect x="21" y="26" width="1" height="1" fill="#a31515" opacity="0.44"/><rect x="21" y="27" width="1" height="1" fill="#a31515" opacity="0.30"/><rect x="22" y="26" width="1" height="1" fill="#a31515" opacity="0.44"/><rect x="22" y="27" width="1" height="1" fill="#a31515" opacity="0.30"/><rect x="23" y="26" width="1" height="1" fill="#a31515" opacity="0.44"/><rect x="23" y="27" width="1" height="1" fill="#a31515" opacity="0.30"/><rect x="24" y="26" width="1" height="1" fill="#a31515" opacity="0.40"/><rect x="24" y="27" width="1" height="1" fill="#a31515" opacity="0.28"/><rect x="25" y="26" width="1" height="1" fill="#a31515" opacity="0.24"/><rect x="25" y="27" width="1" height="1" fill="#a31515" opacity="0.17"/><rect x="26" y="26" width="1" height="1" fill="#a31515" opacity="0.44"/><rect x="26" y="27" width="1" height="1" fill="#a31515" opacity="0.30"/><rect x="27" y="26" width="1" height="1" fill="#a31515" opacity="0.60"/><rect x="27" y="27" width="1" height="1" fill="#a31515" opacity="0.41"/><rect x="29" y="26" width="1" height="1" fill="#a31515" opacity="0.44"/><rect x="29" y="27" width="1" height="1" fill="#a31515" opacity="0.30"/><rect x="30" y="26" width="1" height="1" fill="#a31515" opacity="0.44"/><rect x="30" y="27" width="1" height="1" fill="#a31515" opacity="0.30"/><rect x="31" y="26" width="1" height="1" fill="#a31515" opacity="0.56"/><rect x="31" y="27" width="1" height="1" fill="#a31515" opacity="0.39"/><rect x="32" y="26" width="1" height="1" fill="#a31515" opacity="0.56"/><rect x="32" y="27" width="1" height="1" fill="#a31515" opacity="0.39"/><rect x="33" y="26" width="1" height="1" fill="#a31515" opacity="0.44"/><rect x="33" y="27" width="1" height="1" fill="#a31515" opacity="0.30"/><rect x="34" y="26" width="1" height="1" fill="#a31515" opacity="0.44"/><rect x="34" y="27" width="1" height="1" fill="#a31515" opacity="0.30"/><rect x="36" y="26" width="1" height="1" fill="#a31515" opacity="0.44"/><rect x="36" y="27" width="1" height="1" fill="#a31515" opacity="0.30"/><rect x="37" y="26" width="1" height="1" fill="#a31515" opacity="0.56"/><rect x="37" y="27" width="1" height="1" fill="#a31515" opacity="0.39"/><rect x="38" y="26" width="1" height="1" fill="#a31515" opacity="0.44"/><rect x="38" y="27" width="1" height="1" fill="#a31515" opacity="0.30"/><rect x="39" y="26" width="1" height="1" fill="#a31515" opacity="0.44"/><rect x="39" y="27" width="1" height="1" fill="#a31515" opacity="0.30"/><rect x="40" y="26" width="1" height="1" fill="#a31515" opacity="0.56"/><rect x="40" y="27" width="1" height="1" fill="#a31515" opacity="0.39"/><rect x="41" y="26" width="1" height="1" fill="#a31515" opacity="0.44"/><rect x="41" y="27" width="1" height="1" fill="#a31515" opacity="0.30"/><rect x="42" y="26" width="1" height="1" fill="#a31515" opacity="0.44"/><rect x="42" y="27" width="1" height="1" fill="#a31515" opacity="0.30"/><rect x="44" y="26" width="1" height="1" fill="#a31515" opacity="0.44"/><rect x="44" y="27" width="1" height="1" fill="#a31515" opacity="0.30"/><rect x="46" y="26" width="1" height="1" fill="#a31515" opacity="0.56"/><rect x="46" y="27" width="1" height="1" fill="#a31515" opacity="0.39"/><rect x="47" y="26" width="1" height="1" fill="#a31515" opacity="0.56"/><rect x="47" y="27" width="1" height="1" fill="#a31515" opacity="0.39"/><rect x="48" y="26" width="1" height="1" fill="#a31515" opacity="0.44"/><rect x="48" y="27" width="1" height="1" fill="#a31515" opacity="0.30"/><rect x="49" y="26" width="1" height="1" fill="#a31515" opacity="0.44"/><rect x="49" y="27" width="1" height="1" fill="#a31515" opacity="0.30"/><rect x="50" y="26" width="1" height="1" fill="#a31515" opacity="0.44"/><rect x="50" y="27" width="1" height="1" fill="#a31515" opacity="0.30"/><rect x="52" y="26" width="1" height="1" fill="#a31515" opacity="0.56"/><rect x="52" y="27" width="1" height="1" fill="#a31515" opacity="0.39"/><rect x="53" y="26" width="1" height="1" fill="#a31515" opacity="0.44"/><rect x="53" y="27" width="1" height="1" fill="#a31515" opacity="0.30"/><rect x="54" y="26" width="1" height="1" fill="#a31515" opacity="0.56"/><rect x="54" y="27" width="1" height="1" fill="#a31515" opacity="0.39"/><rect x="56" y="26" width="1" height="1" fill="#0000ff" opacity="0.68"/><rect x="56" y="27" width="1" height="1" fill="#0000ff" opacity="0.47"/><rect x="57" y="26" width="1" height="1" fill="#0000ff" opacity="0.40"/><rect x="57" y="27" width="1" height="1" fill="#0000ff" opacity="0.28"/><rect x="58" y="26" width="1" height="1" fill="#000000" opacity="0.60"/><rect x="58" y="27" width="1" height="1" fill="#000000" opacity="0.41"/><rect x="59" y="26" width="1" height="1" fill="#000000" opacity="0.60"/><rect x="59" y="27" width="1" height="1" fill="#000000" opacity="0.41"/><rect x="60" y="26" width="1" height="1" fill="#0000ff" opacity="0.40"/><rect x="60" y="27" width="1" height="1" fill="#0000ff" opacity="0.28"/><rect x="61" y="26" width="1" height="1" fill="#a31515" opacity="0.24"/><rect x="61" y="27" width="1" height="1" fill="#a31515" opacity="0.17"/><rect x="62" y="26" width="1" height="1" fill="#000000" opacity="0.40"/><rect x="62" y="27" width="1" height="1" fill="#000000" opacity="0.28"/><rect x="63" y="26" width="1" height="1" fill="#000000" opacity="0.24"/><rect x="63" y="27" width="1" height="1" fill="#000000" opacity="0.17"/><rect x="8" y="28" width="1" height="1" fill="#000000" opacity="0.40"/><rect x="8" y="29" width="1" height="1" fill="#000000" opacity="0.28"/><rect x="8" y="30" width="1" height="1" fill="#000000" opacity="0.60"/><rect x="8" y="31" width="1" height="1" fill="#000000" opacity="0.41"/><rect x="9" y="30" width="1" height="1" fill="#000000" opacity="0.60"/><rect x="9" y="31" width="1" height="1" fill="#000000" opacity="0.41"/><rect x="10" y="30" width="1" height="1" fill="#000000" opacity="0.40"/><rect x="10" y="31" width="1" height="1" fill="#000000" opacity="0.28"/><rect x="11" y="30" width="1" height="1" fill="#000000" opacity="0.56"/><rect x="11" y="31" width="1" height="1" fill="#000000" opacity="0.39"/><rect x="12" y="30" width="1" height="1" fill="#000000" opacity="0.44"/><rect x="12" y="31" width="1" height="1" fill="#000000" opacity="0.30"/><rect x="13" y="30" width="1" height="1" fill="#000000" opacity="0.44"/><rect x="13" y="31" width="1" height="1" fill="#000000" opacity="0.30"/><rect x="14" y="30" width="1" height="1" fill="#000000" opacity="0.56"/><rect x="14" y="31" width="1" height="1" fill="#000000" opacity="0.39"/><rect x="15" y="30" width="1" height="1" fill="#000000" opacity="0.56"/><rect x="15" y="31" width="1" height="1" fill="#000000" opacity="0.39"/><rect x="16" y="30" width="1" height="1" fill="#000000" opacity="0.44"/><rect x="16" y="31" width="1" height="1" fill="#000000" opacity="0.30"/><rect x="17" y="30" width="1" height="1" fill="#000000" opacity="0.40"/><rect x="17" y="31" width="1" height="1" fill="#000000" opacity="0.28"/><rect x="18" y="30" width="1" height="1" fill="#a31515" opacity="0.24"/><rect x="18" y="31" width="1" height="1" fill="#a31515" opacity="0.17"/><rect x="19" y="30" width="1" height="1" fill="#a31515" opacity="0.60"/><rect x="19" y="31" width="1" height="1" fill="#a31515" opacity="0.41"/><rect x="20" y="30" width="1" height="1" fill="#a31515" opacity="0.56"/><rect x="20" y="31" width="1" height="1" fill="#a31515" opacity="0.39"/><rect x="21" y="30" width="1" height="1" fill="#a31515" opacity="0.44"/><rect x="21" y="31" width="1" height="1" fill="#a31515" opacity="0.30"/><rect x="22" y="30" width="1" height="1" fill="#a31515" opacity="0.56"/><rect x="22" y="31" width="1" height="1" fill="#a31515" opacity="0.39"/><rect x="24" y="30" width="1" height="1" fill="#a31515" opacity="0.44"/><rect x="24" y="31" width="1" height="1" fill="#a31515" opacity="0.30"/><rect x="25" y="30" width="1" height="1" fill="#a31515" opacity="0.44"/><rect x="25" y="31" width="1" height="1" fill="#a31515" opacity="0.30"/><rect x="26" y="30" width="1" height="1" fill="#a31515" opacity="0.44"/><rect x="26" y="31" width="1" height="1" fill="#a31515" opacity="0.30"/><rect x="27" y="30" width="1" height="1" fill="#a31515" opacity="0.44"/><rect x="27" y="31" width="1" height="1" fill="#a31515" opacity="0.30"/><rect x="28" y="30" width="1" height="1" fill="#a31515" opacity="0.44"/><rect x="28" y="31" width="1" height="1" fill="#a31515" opacity="0.30"/><rect x="30" y="30" width="1" height="1" fill="#a31515" opacity="0.44"/><rect x="30" y="31" width="1" height="1" fill="#a31515" opacity="0.30"/><rect x="31" y="30" width="1" height="1" fill="#a31515" opacity="0.44"/><rect x="31" y="31" width="1" height="1" fill="#a31515" opacity="0.30"/><rect x="32" y="30" width="1" height="1" fill="#a31515" opacity="0.44"/><rect x="32" y="31" width="1" height="1" fill="#a31515" opacity="0.30"/><rect x="33" y="30" width="1" height="1" fill="#a31515" opacity="0.44"/><rect x="33" y="31" width="1" height="1" fill="#a31515" opacity="0.30"/><rect x="34" y="30" width="1" height="1" fill="#a31515" opacity="0.56"/><rect x="34" y="31" width="1" height="1" fill="#a31515" opacity="0.39"/><rect x="35" y="30" width="1" height="1" fill="#a31515" opacity="0.24"/><rect x="35" y="31" width="1" height="1" fill="#a31515" opacity="0.17"/><rect x="36" y="30" width="1" height="1" fill="#000000" opacity="0.40"/><rect x="36" y="31" width="1" height="1" fill="#000000" opacity="0.28"/><rect x="37" y="30" width="1" height="1" fill="#000000" opacity="0.24"/><rect x="37" y="31" width="1" height="1" fill="#000000" opacity="0.17"/><rect x="8" y="32" width="1" height="1" fill="#000000" opacity="0.60"/><rect x="8" y="33" width="1" height="1" fill="#000000" opacity="0.41"/><rect x="9" y="32" width="1" height="1" fill="#000000" opacity="0.60"/><rect x="9" y="33" width="1" height="1" fill="#000000" opacity="0.41"/><rect x="10" y="32" width="1" height="1" fill="#000000" opacity="0.68"/><rect x="10" y="33" width="1" height="1" fill="#000000" opacity="0.47"/><rect x="11" y="32" width="1" height="1" fill="#000000" opacity="0.60"/><rect x="11" y="33" width="1" height="1" fill="#000000" opacity="0.41"/><rect x="12" y="32" width="1" height="1" fill="#000000" opacity="0.40"/><rect x="12" y="33" width="1" height="1" fill="#000000" opacity="0.28"/><rect x="13" y="32" width="1" height="1" fill="#000000" opacity="0.60"/><rect x="13" y="33" width="1" height="1" fill="#000000" opacity="0.41"/><rect x="14" y="32" width="1" height="1" fill="#000000" opacity="0.60"/><rect x="14" y="33" width="1" height="1" fill="#000000" opacity="0.41"/><rect x="15" y="32" width="1" height="1" fill="#000000" opacity="0.68"/><rect x="15" y="33" width="1" height="1" fill="#000000" opacity="0.47"/><rect x="16" y="32" width="1" height="1" fill="#000000" opacity="0.60"/><rect x="16" y="33" width="1" height="1" fill="#000000" opacity="0.41"/><rect x="17" y="32" width="1" height="1" fill="#000000" opacity="0.40"/><rect x="17" y="33" width="1" height="1" fill="#000000" opacity="0.28"/><rect x="18" y="32" width="1" height="1" fill="#098658" opacity="0.60"/><rect x="18" y="33" width="1" height="1" fill="#098658" opacity="0.41"/><rect x="19" y="32" width="1" height="1" fill="#000000" opacity="0.24"/><rect x="19" y="33" width="1" height="1" fill="#000000" opacity="0.17"/><rect x="4" y="34" width="1" height="1" fill="#000000" opacity="0.40"/><rect x="4" y="35" width="1" height="1" fill="#000000" opacity="0.28"/><rect x="4" y="36" width="1" height="1" fill="#000000" opacity="0.60"/><rect x="4" y="37" width="1" height="1" fill="#000000" opacity="0.41"/><rect x="5" y="36" width="1" height="1" fill="#000000" opacity="0.60"/><rect x="5" y="37" width="1" height="1" fill="#000000" opacity="0.41"/><rect x="6" y="36" width="1" height="1" fill="#000000" opacity="0.68"/><rect x="6" y="37" width="1" height="1" fill="#000000" opacity="0.47"/><rect x="7" y="36" width="1" height="1" fill="#000000" opacity="0.60"/><rect x="7" y="37" width="1" height="1" fill="#000000" opacity="0.41"/><rect x="8" y="36" width="1" height="1" fill="#000000" opacity="0.40"/><rect x="8" y="37" width="1" height="1" fill="#000000" opacity="0.28"/><rect x="9" y="36" width="1" height="1" fill="#000000" opacity="0.60"/><rect x="9" y="37" width="1" height="1" fill="#000000" opacity="0.41"/><rect x="10" y="36" width="1" height="1" fill="#000000" opacity="0.60"/><rect x="10" y="37" width="1" height="1" fill="#000000" opacity="0.41"/><rect x="11" y="36" width="1" height="1" fill="#000000" opacity="0.68"/><rect x="11" y="37" width="1" height="1" fill="#000000" opacity="0.47"/><rect x="12" y="36" width="1" height="1" fill="#000000" opacity="0.60"/><rect x="12" y="37" width="1" height="1" fill="#000000" opacity="0.41"/><rect x="13" y="36" width="1" height="1" fill="#000000" opacity="0.40"/><rect x="13" y="37" width="1" height="1" fill="#000000" opacity="0.28"/><rect x="14" y="36" width="1" height="1" fill="#098658" opacity="0.60"/><rect x="14" y="37" width="1" height="1" fill="#098658" opacity="0.41"/><rect x="4" y="38" width="1" height="1" fill="#000000" opacity="0.56"/><rect x="4" y="39" width="1" height="1" fill="#000000" opacity="0.39"/><rect x="5" y="38" width="1" height="1" fill="#000000" opacity="0.44"/><rect x="5" y="39" width="1" height="1" fill="#000000" opacity="0.30"/><rect x="6" y="38" width="1" height="1" fill="#000000" opacity="0.56"/><rect x="6" y="39" width="1" height="1" fill="#000000" opacity="0.39"/><rect x="7" y="38" width="1" height="1" fill="#000000" opacity="0.44"/><rect x="7" y="39" width="1" height="1" fill="#000000" opacity="0.30"/><rect x="8" y="38" width="1" height="1" fill="#000000" opacity="0.44"/><rect x="8" y="39" width="1" height="1" fill="#000000" opacity="0.30"/><rect x="9" y="38" width="1" height="1" fill="#000000" opacity="0.40"/><rect x="9" y="39" width="1" height="1" fill="#000000" opacity="0.28"/><rect x="10" y="38" width="1" height="1" fill="#a31515" opacity="0.24"/><rect x="10" y="39" width="1" height="1" fill="#a31515" opacity="0.17"/><rect x="11" y="38" width="1" height="1" fill="#a31515" opacity="0.60"/><rect x="11" y="39" width="1" height="1" fill="#a31515" opacity="0.41"/><rect x="12" y="38" width="1" height="1" fill="#a31515" opacity="0.56"/><rect x="12" y="39" width="1" height="1" fill="#a31515" opacity="0.39"/><rect x="13" y="38" width="1" height="1" fill="#a31515" opacity="0.44"/><rect x="13" y="39" width="1" height="1" fill="#a31515" opacity="0.30"/><rect x="14" y="38" width="1" height="1" fill="#a31515" opacity="0.56"/><rect x="14" y="39" width="1" height="1" fill="#a31515" opacity="0.39"/><rect x="15" y="38" width="1" height="1" fill="#a31515" opacity="0.56"/><rect x="15" y="39" width="1" height="1" fill="#a31515" opacity="0.39"/><rect x="16" y="38" width="1" height="1" fill="#a31515" opacity="0.44"/><rect x="16" y="39" width="1" height="1" fill="#a31515" opacity="0.30"/><rect x="17" y="38" width="1" height="1" fill="#a31515" opacity="0.44"/><rect x="17" y="39" width="1" height="1" fill="#a31515" opacity="0.30"/><rect x="18" y="38" width="1" height="1" fill="#a31515" opacity="0.44"/><rect x="18" y="39" width="1" height="1" fill="#a31515" opacity="0.30"/><rect x="20" y="38" width="1" height="1" fill="#a31515" opacity="0.44"/><rect x="20" y="39" width="1" height="1" fill="#a31515" opacity="0.30"/><rect x="21" y="38" width="1" height="1" fill="#a31515" opacity="0.44"/><rect x="21" y="39" width="1" height="1" fill="#a31515" opacity="0.30"/><rect x="22" y="38" width="1" height="1" fill="#a31515" opacity="0.44"/><rect x="22" y="39" width="1" height="1" fill="#a31515" opacity="0.30"/><rect x="23" y="38" width="1" height="1" fill="#a31515" opacity="0.44"/><rect x="23" y="39" width="1" height="1" fill="#a31515" opacity="0.30"/><rect x="25" y="38" width="1" height="1" fill="#a31515" opacity="0.56"/><rect x="25" y="39" width="1" height="1" fill="#a31515" opacity="0.39"/><rect x="26" y="38" width="1" height="1" fill="#a31515" opacity="0.44"/><rect x="26" y="39" width="1" height="1" fill="#a31515" opacity="0.30"/><rect x="27" y="38" width="1" height="1" fill="#a31515" opacity="0.56"/><rect x="27" y="39" width="1" height="1" fill="#a31515" opacity="0.39"/><rect x="28" y="38" width="1" height="1" fill="#a31515" opacity="0.44"/><rect x="28" y="39" width="1" height="1" fill="#a31515" opacity="0.30"/><rect x="29" y="38" width="1" height="1" fill="#a31515" opacity="0.44"/><rect x="29" y="39" width="1" height="1" fill="#a31515" opacity="0.30"/><rect x="30" y="38" width="1" height="1" fill="#a31515" opacity="0.44"/><rect x="30" y="39" width="1" height="1" fill="#a31515" opacity="0.30"/><rect x="31" y="38" width="1" height="1" fill="#a31515" opacity="0.44"/><rect x="31" y="39" width="1" height="1" fill="#a31515" opacity="0.30"/><rect x="32" y="38" width="1" height="1" fill="#a31515" opacity="0.40"/><rect x="32" y="39" width="1" height="1" fill="#a31515" opacity="0.28"/><rect x="33" y="38" width="1" height="1" fill="#a31515" opacity="0.40"/><rect x="33" y="39" width="1" height="1" fill="#a31515" opacity="0.28"/><rect x="34" y="38" width="1" height="1" fill="#a31515" opacity="0.24"/><rect x="34" y="39" width="1" height="1" fill="#a31515" opacity="0.17"/><rect x="35" y="38" width="1" height="1" fill="#a31515" opacity="0.44"/><rect x="35" y="39" width="1" height="1" fill="#a31515" opacity="0.30"/><rect x="36" y="38" width="1" height="1" fill="#a31515" opacity="0.60"/><rect x="36" y="39" width="1" height="1" fill="#a31515" opacity="0.41"/><rect x="37" y="38" width="1" height="1" fill="#a31515" opacity="0.44"/><rect x="37" y="39" width="1" height="1" fill="#a31515" opacity="0.30"/><rect x="38" y="38" width="1" height="1" fill="#a31515" opacity="0.44"/><rect x="38" y="39" width="1" height="1" fill="#a31515" opacity="0.30"/><rect x="39" y="38" width="1" height="1" fill="#a31515" opacity="0.44"/><rect x="39" y="39" width="1" height="1" fill="#a31515" opacity="0.30"/><rect x="41" y="38" width="1" height="1" fill="#a31515" opacity="0.44"/><rect x="41" y="39" width="1" height="1" fill="#a31515" opacity="0.30"/><rect x="42" y="38" width="1" height="1" fill="#a31515" opacity="0.56"/><rect x="42" y="39" width="1" height="1" fill="#a31515" opacity="0.39"/><rect x="43" y="38" width="1" height="1" fill="#a31515" opacity="0.44"/><rect x="43" y="39" width="1" height="1" fill="#a31515" opacity="0.30"/><rect x="45" y="38" width="1" height="1" fill="#0000ff" opacity="0.68"/><rect x="45" y="39" width="1" height="1" fill="#0000ff" opacity="0.47"/><rect x="46" y="38" width="1" height="1" fill="#0000ff" opacity="0.40"/><rect x="46" y="39" width="1" height="1" fill="#0000ff" opacity="0.28"/><rect x="47" y="38" width="1" height="1" fill="#000000" opacity="0.60"/><rect x="47" y="39" width="1" height="1" fill="#000000" opacity="0.41"/><rect x="48" y="38" width="1" height="1" fill="#000000" opacity="0.60"/><rect x="48" y="39" width="1" height="1" fill="#000000" opacity="0.41"/><rect x="49" y="38" width="1" height="1" fill="#000000" opacity="0.68"/><rect x="49" y="39" width="1" height="1" fill="#000000" opacity="0.47"/><rect x="50" y="38" width="1" height="1" fill="#000000" opacity="0.60"/><rect x="50" y="39" width="1" height="1" fill="#000000" opacity="0.41"/><rect x="51" y="38" width="1" height="1" fill="#0000ff" opacity="0.40"/><rect x="51" y="39" width="1" height="1" fill="#0000ff" opacity="0.28"/><rect x="53" y="38" width="1" height="1" fill="#a31515" opacity="0.44"/><rect x="53" y="39" width="1" height="1" fill="#a31515" opacity="0.30"/><rect x="54" y="38" width="1" height="1" fill="#a31515" opacity="0.44"/><rect x="54" y="39" width="1" height="1" fill="#a31515" opacity="0.30"/><rect x="55" y="38" width="1" height="1" fill="#a31515" opacity="0.44"/><rect x="55" y="39" width="1" height="1" fill="#a31515" opacity="0.30"/><rect x="56" y="38" width="1" height="1" fill="#a31515" opacity="0.44"/><rect x="56" y="39" width="1" height="1" fill="#a31515" opacity="0.30"/><rect x="57" y="38" width="1" height="1" fill="#a31515" opacity="0.56"/><rect x="57" y="39" width="1" height="1" fill="#a31515" opacity="0.39"/><rect x="58" y="38" width="1" height="1" fill="#a31515" opacity="0.44"/><rect x="58" y="39" width="1" height="1" fill="#a31515" opacity="0.30"/><rect x="59" y="38" width="1" height="1" fill="#a31515" opacity="0.24"/><rect x="59" y="39" width="1" height="1" fill="#a31515" opacity="0.17"/><rect x="60" y="38" width="1" height="1" fill="#000000" opacity="0.40"/><rect x="60" y="39" width="1" height="1" fill="#000000" opacity="0.28"/><rect x="61" y="38" width="1" height="1" fill="#000000" opacity="0.24"/><rect x="61" y="39" width="1" height="1" fill="#000000" opacity="0.17"/><rect x="0" y="40" width="1" height="1" fill="#000000" opacity="0.40"/><rect x="0" y="41" width="1" height="1" fill="#000000" opacity="0.28"/></svg>
<div class="abs" style="left:1352px;top:92px;width:1px;height:614px;background:#e4e4e4"></div>
<div class="abs" style="left:1352px;top:92px;width:14px;height:379px;background:#c1c1c1;border-left:1px solid #b0b0b0;border-top:1px solid #b0b0b0"></div>
<div class="abs" style="left:1357px;top:185px;width:5px;height:12px;background:#888888"></div>
<div class="abs" style="left:1357px;top:327px;width:5px;height:11px;background:#888888"></div>
<div class="abs" style="left:1353px;top:325px;width:13px;height:2px;background:#505050"></div>
<div class="abs" id="status"></div>
<div class="abs" id="task"></div>
<div class="abs" style="left:0px;top:728px;width:48px;height:40px;background:#1c1e20;"></div>
<svg style="left:0;top:728px" width="48" height="40" viewBox="0 728 48 40"><path d="M16 741.2L22 740.700V746.900H16ZM23 740.600L32.300 739.800V746.900H23ZM16 748H22V754.900L16 754.100ZM23 748H32.300V756.100L23 755.200Z" fill="#fff"/></svg>
<div class="abs" style="left:48px;top:728px;width:287.4px;height:40px;background:#f3f3f3;border-bottom:1px solid #b5b5b5;border-left:1px solid #d8d8d8;border-top:1px solid #d0d0d0"></div>
<svg style="left:59px;top:738.7px" width="18" height="18" viewBox="0 0 18 18" ><circle cx="11.2" cy="6.600" r="5.300" fill="none" stroke="#2b2b2b" stroke-width="1.150"/><path d="M7.400 10.400L1 16.800" stroke="#2b2b2b" stroke-width="1.300"/></svg>
<svg style="left:0;top:0" width="1366" height="768" viewBox="0 0 1366 768"><defs><linearGradient id="gy" x1="0" y1="0" x2="0" y2="1"><stop offset="0" stop-color="#ffd02c"/><stop offset="1" stop-color="#f8ac18"/></linearGradient></defs><path d="M288.2 737.3Q289.88 745.82 298.4 747.5Q289.88 749.18 288.2 757.7Q286.52 749.18 278.0 747.5Q286.52 745.82 288.2 737.3Z" fill="url(#gy)" stroke="url(#gy)" stroke-width="2.86" stroke-linejoin="round"/><path d="M310.8 746.6Q311.56 750.44 315.40000000000003 751.2Q311.56 751.96 310.8 755.8000000000001Q310.04 751.96 306.2 751.2Q310.04 750.44 310.8 746.6Z" fill="#fbbd1e" stroke="#fbbd1e" stroke-width="1.29" stroke-linejoin="round"/><g transform="rotate(18 269 756)"><path d="M269 752.4Q269.59 755.41 272.6 756Q269.59 756.59 269 759.6Q268.41 756.59 265.4 756Q268.41 755.41 269 752.4Z" fill="#16a3ee" stroke="#16a3ee" stroke-width="1.01" stroke-linejoin="round"/></g><circle cx="304.6" cy="738" r="1.8" fill="#ee6a2c"/><circle cx="323" cy="757.4" r="1.8" fill="#7cbb2e"/></svg>
<svg style="left:351px;top:736px" width="24" height="24" viewBox="0 0 24 24" ><defs><linearGradient id="cp1" x1="0.3" y1="0" x2="0.1" y2="1"><stop offset="0" stop-color="#2370e8"/><stop offset="0.3" stop-color="#2fa9e6"/><stop offset="0.55" stop-color="#4ccf9c"/><stop offset="0.8" stop-color="#c9dc3c"/><stop offset="1" stop-color="#f7c52c"/></linearGradient><linearGradient id="cp2" x1="0.7" y1="0" x2="0.4" y2="1"><stop offset="0" stop-color="#a65cf2"/><stop offset="0.35" stop-color="#d655c6"/><stop offset="0.65" stop-color="#f2607d"/><stop offset="1" stop-color="#fb8a3a"/></linearGradient></defs><path d="M7.200 1.700H13.600Q16.400 1.700 16.600 4.200L16.700 5.400Q14.700 5.400 14 7.600L11.600 15.200Q11 16.600 9.400 16.600H5Q0.300 16.600 1.300 12.400L3.600 4.500Q4.400 1.700 7.200 1.700Z" fill="url(#cp1)"/><path d="M16.800 22.300H10.400Q7.600 22.300 7.400 19.800L7.300 18.600Q9.300 18.600 10 16.400L12.400 8.800Q13 7.400 14.600 7.400H19Q23.700 7.400 22.700 11.600L20.400 19.500Q19.600 22.300 16.800 22.300Z" fill="url(#cp2)"/></svg>
<svg style="left:400px;top:737px" width="24" height="21" viewBox="0 0 24 21" ><path d="M1 3Q1 1.700 2.300 1.700H9.300L10.900 3.300H21.300Q22.500 3.300 22.500 4.500V7H1Z" fill="#e8a317"/><rect x="1" y="4.300" width="21.500" height="14.400" rx="1" fill="#ffd869"/><path d="M1 11.500H22.500V17.700Q22.500 18.700 21.500 18.700H2Q1 18.700 1 17.700Z" fill="#f9c846"/><path d="M5.100 12.800Q5.100 12 5.900 12H18.100Q18.900 12 18.900 12.800V19.700H15.300V15.600H8.900V19.700H5.100Z" fill="#3a96e2"/></svg>
<div class="abs" style="left:392px;top:766px;width:31px;height:2px;background:#76b9ed;"></div>
<div class="abs" style="left:424.5px;top:766px;width:7.5px;height:2px;background:#5d8fb5;"></div>
<svg style="left:450px;top:737px" width="22" height="22" viewBox="0 0 22 22" ><rect width="22" height="22" rx="3" fill="#86b81f"/><path d="M3.800 15.600Q0.900 15.600 0.900 13Q0.900 10.600 3.400 10.300Q3.700 8.300 5.700 8.100Q6.500 5.300 9.600 5.300Q12.500 5.300 13.400 7.900Q15.600 6.600 17.300 8.500Q21.200 8.500 21.200 12.200Q21.200 15.600 17.800 15.600Z" fill="#fff"/><path d="M3.300 13.900Q5.800 14.200 5.700 12.300Q5.500 10.900 4.100 11.300M10.700 13.700Q8 13.300 8.600 11Q9.300 9.300 11.200 10.100M18.600 13.800Q16.200 14 16.200 12Q16.400 10.400 18.100 10.800M12.500 14.500Q14.300 13.800 14 12" fill="none" stroke="#86b81f" stroke-width="0.800"/></svg>
<svg style="left:497.5px;top:735.5px" width="25" height="24.5" viewBox="0 0 25 24.500" ><defs><linearGradient id="eg1" x1="0" y1="0.300" x2="1" y2="0.200"><stop offset="0" stop-color="#1e9be6"/><stop offset="0.500" stop-color="#2fbfc0"/><stop offset="1" stop-color="#6fdc4c"/></linearGradient><linearGradient id="eg2" x1="0" y1="0" x2="0.300" y2="1"><stop offset="0" stop-color="#1c8ee0"/><stop offset="1" stop-color="#0d53a8"/></linearGradient></defs><circle cx="12.500" cy="12.300" r="12" fill="url(#eg2)"/><path d="M7.800 12.500Q6.500 17.500 11 21.300Q15.500 24 21 20.500Q17 21.500 14 19Q11.500 16.500 12.300 12.800Q9.500 10.500 7.800 12.500Z" fill="#0b4a9c"/><path d="M25 13.300Q23.500 16.600 19.500 16.800Q15.600 16.800 15.300 13.600Q13 12.800 12.300 14.500Q12.300 18.500 16 20.300Q19.500 21.300 22.500 19.300L24.500 16.500Z" fill="#26392a"/><path d="M0.500 12Q0.500 0.300 12.500 0.300Q22.800 0.300 24.400 10.300Q24.800 15.300 20 16.200Q15.800 16.500 15.600 13.600Q16.800 8.500 11.500 7.900Q5 7.700 2.800 14Q1.800 18 4.300 21Q0.300 17.500 0.500 12Z" fill="url(#eg1)"/></svg>
<div class="abs" style="left:490px;top:766px;width:40px;height:2px;background:#76b9ed;"></div>
<svg style="left:547px;top:736px" width="24" height="24" viewBox="0 0 24 24" ><rect width="24" height="24" fill="#562b8a"/><circle cx="12" cy="13" r="5.400" fill="none" stroke="#cdbbe6" stroke-width="0.500" opacity="0.800"/><path d="M7 8.800H17V17.800" fill="none" stroke="#cdbbe6" stroke-width="0.400" opacity="0.600"/><path d="M7 17.800H17" stroke="#e4daf2" stroke-width="0.700"/><circle cx="12" cy="9.700" r="1" fill="#fff"/><path d="M12 10.500V15M8.300 10.600L12 11.600L15.700 10.600M12 14.500L10.800 17.800M12 14.500L13.200 17.800" stroke="#fff" stroke-width="1" fill="none"/></svg>
<svg style="left:596.5px;top:736.3px" width="23" height="23" viewBox="0 0 23 23" ><rect width="23" height="23" rx="3.300" fill="#3f9632"/><path d="M4.800 6.200L8 5V18.800L4.800 17.600Z" fill="none" stroke="#fff" stroke-width="1.200" stroke-linejoin="round"/><path d="M8 4.200L11.500 3V20.800L8 19.600Z" fill="none" stroke="#fff" stroke-width="1.200" stroke-linejoin="round"/><path d="M10.300 2.300L18.200 4.300V18.600L12.300 21Z" fill="#3f9632" stroke="#fff" stroke-width="1.300" stroke-linejoin="round"/><path d="M12.500 6.800L16.500 7.600M12.500 9.800L16.500 10.400M12.500 12.800L16.500 13.200M12.500 15.800L16.500 16" stroke="#fff" stroke-width="1.400"/></svg>
<svg style="left:648.8px;top:737.2px" width="15.4" height="21" viewBox="0 0 15.400 21" ><path d="M0 0H12.200L15.400 3.200V21H0Z" fill="#f5f5f5"/><path d="M12.200 0V3.200H15.400Z" fill="#cfcfcf"/></svg>
<svg style="left:693.7px;top:735.6px" width="24.5" height="24.5" viewBox="0 0 25 25" ><defs><linearGradient id="zg" x1="0" y1="0" x2="0" y2="1"><stop offset="0" stop-color="#2a78ff"/><stop offset="1" stop-color="#0b4fe3"/></linearGradient></defs><rect width="25" height="25" rx="11.500" fill="url(#zg)"/><path d="M6.600 7.200H18.300L7.200 18H18.900" fill="none" stroke="#fff" stroke-width="3" stroke-linejoin="round" stroke-linecap="round"/></svg>
<svg style="left:743px;top:736px" width="25" height="24" viewBox="0 0 25 24" ><ellipse cx="10.700" cy="12" rx="9.500" ry="4" transform="rotate(-20 10.700 12)" fill="#a9a9a9"/><ellipse cx="12" cy="9" rx="11" ry="6.300" transform="rotate(-21 12 9)" fill="#f3f3f3" stroke="#de3b48" stroke-width="1.300"/><path d="M8.500 6L16 15.500M15.500 4.500L13.800 15.500" stroke="#8a8a8a" stroke-width="1.100"/><ellipse cx="15.500" cy="19.300" rx="1.700" ry="3" transform="rotate(25 15.500 19.300)" fill="none" stroke="#2693dc" stroke-width="1.400"/><ellipse cx="20.300" cy="15.800" rx="1.700" ry="3" transform="rotate(-60 20.300 15.800)" fill="none" stroke="#2693dc" stroke-width="1.400"/></svg>
<svg style="left:791.5px;top:735.5px" width="26" height="27" viewBox="0 0 26 27" ><circle cx="12.500" cy="12.500" r="12" fill="#fbbc05"/><path d="M12.500 12.500L2.100 6.500A12 12 0 0 1 22.900 6.500Z" fill="#ea4335"/><path d="M12.500 0.500A12 12 0 0 1 22.900 6.500H12.500Z" fill="#ea4335"/><path d="M12.500 12.500L2.100 6.500A12 12 0 0 0 9 24L14 15Z" fill="#34a853"/><circle cx="12.500" cy="12.500" r="5.600" fill="#fff"/><circle cx="12.500" cy="12.500" r="4.400" fill="#4285f4"/><circle cx="18.500" cy="18.500" r="7.600" fill="#128cd9"/><rect x="17.800" y="15" width="1.600" height="7" rx="0.500" fill="#b5dff7"/></svg>
<div class="abs" style="left:784px;top:766px;width:40px;height:2px;background:#76b9ed;"></div>
<div class="abs" style="left:829px;top:728px;width:48px;height:40px;background:rgba(255,255,255,0.21);"></div>
<svg style="left:840.5px;top:736px" width="24.5" height="24" viewBox="0 0 100 100" ><path fill="#0f7fd2" d="M74 0L74 28L11 81L1 71Z"/><path fill="#0b74c6" d="M74 100L74 72L11 19L1 29Z"/><path fill="#27a7f3" d="M74 0L100 12V88L74 100Z"/></svg>
<div class="abs" style="left:829px;top:766px;width:48px;height:2px;background:#76b9ed;"></div>
<svg style="left:1225px;top:744.5px" width="12" height="7" viewBox="0 0 12 7" ><path d="M0.500 6.500L6 1L11.500 6.500" fill="none" stroke="#fff" stroke-width="1.100"/></svg>
<svg style="left:0;top:728px" width="1366" height="40" viewBox="0 728 1366 40"><path d="M1325.100 739.900H1341.100V753H1333.800L1330.600 756.400V753H1325.100Z" fill="#fff"/><path d="M1328 743.500H1338M1328 746.400H1338M1328 749.400H1334" stroke="#24392b" stroke-width="1"/></svg>
<svg style="left:1332.2px;top:747px" width="17" height="17" viewBox="0 0 17 17" ><circle cx="8.500" cy="8.500" r="7.900" fill="#343736" stroke="#8b918d" stroke-width="1"/></svg>
<div class="abs" style="left:1361px;top:728px;width:1px;height:40px;background:#8f9a91;"></div>
<svg style="left:10px;top:10px" width="16" height="16" viewBox="0 0 100 100" ><path fill="#0f7fd2" d="M74 0L74 28L11 81L1 71Z"/><path fill="#0b74c6" d="M74 100L74 72L11 19L1 29Z"/><path fill="#27a7f3" d="M74 0L100 12V88L74 100Z"/></svg>
<svg style="left:305px;top:16.5px" width="12" height="3" viewBox="0 0 12 3" ><circle cx="1.3" cy="1.5" r="1" fill="#333"/><circle cx="5.6" cy="1.5" r="1" fill="#333"/><circle cx="9.9" cy="1.5" r="1" fill="#333"/></svg>
<svg style="left:375px;top:11px" width="14" height="14" viewBox="0 0 14 14" ><path d="M13 7H1.5M7 1.2L1.2 7L7 12.8" fill="none" stroke="#333" stroke-width="1.1"/></svg>
<svg style="left:401px;top:11px" width="14" height="14" viewBox="0 0 14 14" ><path d="M1 7H12.5M7 1.2L12.8 7L7 12.8" fill="none" stroke="#a0a0a0" stroke-width="1.1"/></svg>
<svg style="left:620.3px;top:12px" width="12.4" height="12.4" viewBox="0 0 13 13" ><circle cx="5.4" cy="5.4" r="4.3" fill="none" stroke="#5a5a5a" stroke-width="1.1"/><path d="M8.5 8.5L12.3 12.3" stroke="#5a5a5a" stroke-width="1.1"/></svg>
<svg style="left:960px;top:8px" width="20" height="20" viewBox="0 0 20 20" ><path d="M10.9 4.4H4.6Q3.1 4.4 3.1 5.9V11.9Q3.1 13.4 4.6 13.4H6.3V16.5L10.3 13.4H14.9Q16.4 13.4 16.4 11.9V11" fill="none" stroke="#333" stroke-width="1.05" stroke-linejoin="round"/><path d="M14.5 1.5000000000000004Q15.022 3.878 17.4 4.4Q15.022 4.922000000000001 14.5 7.300000000000001Q13.978 4.922000000000001 11.6 4.4Q13.978 3.878 14.5 1.5000000000000004Z" fill="#333"/><path d="M17.3 6.3Q17.606 7.694 19.0 8Q17.606 8.306 17.3 9.7Q16.994 8.306 15.600000000000001 8Q16.994 7.694 17.3 6.3Z" fill="#333"/></svg>
<svg style="left:982.5px;top:15px" width="9" height="6" viewBox="0 0 9 6" ><path d="M0.6 0.9L4.5 4.6L8.4 0.9" fill="none" stroke="#444" stroke-width="1"/></svg>
<svg style="left:1127px;top:10px" width="16" height="16" viewBox="0 0 16 16" ><rect x="1" y="1.5" width="5.5" height="13" rx="1.2" fill="none" stroke="#333" stroke-width="1.1"/><rect x="9.2" y="1.5" width="5.3" height="4.6" rx="1.2" fill="none" stroke="#333" stroke-width="1.1"/><rect x="9.2" y="9.4" width="5.3" height="5.1" rx="1.2" fill="none" stroke="#333" stroke-width="1.1"/></svg>
<svg style="left:1153px;top:10px" width="16" height="16" viewBox="0 0 16 16" ><rect x="1.3" y="1.5" width="13.6" height="13" rx="2" fill="none" stroke="#333" stroke-width="1.1"/><path d="M3 1.5H7.2V14.5H3Q1.3 14.5 1.3 12.8V3.2Q1.3 1.5 3 1.5Z" fill="#333"/></svg>
<svg style="left:1179px;top:10px" width="16" height="16" viewBox="0 0 16 16" ><rect x="1.3" y="1.5" width="13.6" height="13" rx="2" fill="none" stroke="#333" stroke-width="1.1"/><path d="M1.3 10.5H14.9" fill="none" stroke="#333" stroke-width="1.1"/></svg>
<svg style="left:1205px;top:10px" width="16" height="16" viewBox="0 0 16 16" ><rect x="1.3" y="1.5" width="13.6" height="13" rx="2" fill="none" stroke="#333" stroke-width="1.1"/><path d="M8.3 1.5V14.5" fill="none" stroke="#333" stroke-width="1.1"/></svg>
<svg style="left:1245.5px;top:16px" width="11" height="1" viewBox="0 0 11 1" ><rect width="11" height="1" fill="#333"/></svg>
<svg style="left:1291.5px;top:11.5px" width="11" height="11" viewBox="0 0 11 11" ><rect x="0.5" y="2.5" width="8" height="8" rx="1" fill="none" stroke="#333" stroke-width="1"/><path d="M2.5 2.5V1.5Q2.5 0.5 3.5 0.5H9.5Q10.5 0.5 10.5 1.5V7.5Q10.5 8.5 9.5 8.5H8.5" fill="none" stroke="#333" stroke-width="1"/></svg>
<svg style="left:1337.5px;top:11.5px" width="11" height="11" viewBox="0 0 11 11" ><path d="M0.3 0.3L10.7 10.7M10.7 0.3L0.3 10.7" stroke="#333" stroke-width="1"/></svg>
<svg style="left:0;top:0" width="48" height="706" viewBox="0 0 48 706"><path d="M19.6 47.5H26.2L32.9 54.2V65.2Q32.9 67 31.1 67H19.6Q17.8 67 17.8 65.2V49.3Q17.8 47.5 19.6 47.5Z" fill="none" stroke="#fff" stroke-width="1.8" stroke-linejoin="round"/><path d="M26 47.7V54.4H32.7" fill="none" stroke="#fff" stroke-width="1.8" stroke-linejoin="round"/><path d="M14 50.6V68Q14 69.9 15.9 69.9H29.2" fill="none" stroke="#fff" stroke-width="1.8" stroke-linejoin="round" stroke-linecap="round"/><circle cx="21.9" cy="104.4" r="7.8" fill="none" stroke="#868686" stroke-width="1.6"/><path d="M27.6 110.2L34.4 117.4" stroke="#868686" stroke-width="1.7"/><circle cx="18.75" cy="146.4" r="3.2" fill="none" stroke="#868686" stroke-width="1.5"/><circle cx="18.75" cy="163.2" r="3.2" fill="none" stroke="#868686" stroke-width="1.5"/><circle cx="29.1" cy="151" r="3.2" fill="none" stroke="#868686" stroke-width="1.5"/><path d="M18.75 149.6V160M29.1 154.2Q29.1 157.2 25.5 157.2H18.75" fill="none" stroke="#868686" stroke-width="1.5"/><path d="M17 202V194.4L32.8 203.2L24.4 208.2" fill="none" stroke="#868686" stroke-width="1.5" stroke-linejoin="round"/><path d="M14.9 209.2Q14.9 204.6 18.1 204.6Q21.3 204.6 21.3 209.2V211Q21.3 214.4 18.1 214.4Q14.9 214.4 14.9 211Z" fill="none" stroke="#868686" stroke-width="1.3"/><path d="M15 207.6H21.2M12 204.6L14.9 206.8M24.2 204.6L21.3 206.8M11.6 209.8H14.9M24.6 209.8H21.3M12 214.8L15 212.6M24.2 214.8L21.2 212.6" fill="none" stroke="#868686" stroke-width="1.2"/><path d="M15.6 242.3H21.9Q23.4 242.3 23.4 243.8V251.9H31.3Q32.8 251.9 32.8 253.4V259.5Q32.8 261 31.3 261H15.6Q14.1 261 14.1 259.5V243.8Q14.1 242.3 15.6 242.3ZM14.1 251.9H23.4V261" fill="none" stroke="#868686" stroke-width="1.5" stroke-linejoin="round"/><rect x="25.15" y="242.45" width="7.5" height="7.5" rx="0.9" transform="rotate(45 28.9 246.2)" fill="none" stroke="#868686" stroke-width="1.5"/><circle cx="24" cy="633.75" r="10.3" fill="none" stroke="#868686" stroke-width="1.4"/><circle cx="24" cy="630" r="3.4" fill="#868686"/><path d="M18.1 634.5H29.9Q29.9 640.6 24 640.6Q18.1 640.6 18.1 634.5Z" fill="#868686"/><path d="M21.43 675.27 L21.99 672.20 L26.01 672.20 L26.57 675.27 L28.63 676.46 L31.57 675.41 L33.58 678.89 L31.20 680.91 L31.20 683.29 L33.58 685.31 L31.57 688.79 L28.63 687.74 L26.57 688.93 L26.01 692.00 L21.99 692.00 L21.43 688.93 L19.37 687.74 L16.43 688.79 L14.42 685.31 L16.80 683.29 L16.80 680.91 L14.42 678.89 L16.43 675.41 L19.37 676.46Z" fill="none" stroke="#868686" stroke-width="1.75" stroke-linejoin="round"/><circle cx="24" cy="682.1" r="2.5" fill="none" stroke="#868686" stroke-width="1.5"/></svg>
<svg style="left:52.7px;top:78.2px" width="10.4" height="6.4" viewBox="0 0 10 6" ><path d="M0.5 0.6L5 5.1L9.5 0.6" fill="none" stroke="#424242" stroke-width="1.1"/></svg>
<svg style="left:61.7px;top:100px" width="10.4" height="6.4" viewBox="0 0 10 6" ><path d="M0.5 0.6L5 5.1L9.5 0.6" fill="none" stroke="#424242" stroke-width="1.1"/></svg>
<svg style="left:72px;top:119.7px" width="6" height="10" viewBox="0 0 6 10" ><path d="M0.6 0.5L5.1 5L0.6 9.5" fill="none" stroke="#424242" stroke-width="1.1"/></svg>
<svg style="left:55px;top:669px" width="6" height="10" viewBox="0 0 6 10" ><path d="M0.6 0.5L5.1 5L0.6 9.5" fill="none" stroke="#424242" stroke-width="1.1"/></svg>
<svg style="left:55px;top:691px" width="6" height="10" viewBox="0 0 6 10" ><path d="M0.6 0.5L5.1 5L0.6 9.5" fill="none" stroke="#424242" stroke-width="1.1"/></svg>
<svg style="left:320px;top:51.5px" width="11" height="3" viewBox="0 0 11 3" ><circle cx="1.2" cy="1.5" r="1" fill="#424242"/><circle cx="5.3" cy="1.5" r="1" fill="#424242"/><circle cx="9.4" cy="1.5" r="1" fill="#424242"/></svg>
<svg style="left:67.5px;top:141.5px" width="13" height="11" viewBox="0 0 13 11" ><path d="M0.85 7.25V1H9.5" fill="none" stroke="#a074c4" stroke-width="1"/><rect x="3" y="3.2" width="9" height="6.8" fill="none" stroke="#a074c4" stroke-width="1"/><path d="M3.4 9.6V8.3L6.1 5.8L8.3 8L10.2 6.5L11.6 7.8V9.600Z" fill="#a074c4"/><circle cx="10" cy="4.900" r="0.650" fill="#a074c4"/></svg>
<svg style="left:67.5px;top:163.5px" width="13" height="11" viewBox="0 0 13 11" ><path d="M0.85 7.25V1H9.5" fill="none" stroke="#a074c4" stroke-width="1"/><rect x="3" y="3.2" width="9" height="6.8" fill="none" stroke="#a074c4" stroke-width="1"/><path d="M3.4 9.6V8.3L6.1 5.8L8.3 8L10.2 6.5L11.6 7.8V9.600Z" fill="#a074c4"/><circle cx="10" cy="4.900" r="0.650" fill="#a074c4"/></svg>
<svg style="left:67.5px;top:207.5px" width="13" height="11" viewBox="0 0 13 11" ><path d="M0.85 7.25V1H9.5" fill="none" stroke="#a074c4" stroke-width="1"/><rect x="3" y="3.2" width="9" height="6.8" fill="none" stroke="#a074c4" stroke-width="1"/><path d="M3.4 9.6V8.3L6.1 5.8L8.3 8L10.2 6.5L11.6 7.8V9.600Z" fill="#a074c4"/><circle cx="10" cy="4.900" r="0.650" fill="#a074c4"/></svg>
<svg style="left:67.5px;top:229.5px" width="13" height="11" viewBox="0 0 13 11" ><path d="M0.85 7.25V1H9.5" fill="none" stroke="#a074c4" stroke-width="1"/><rect x="3" y="3.2" width="9" height="6.8" fill="none" stroke="#a074c4" stroke-width="1"/><path d="M3.4 9.6V8.3L6.1 5.8L8.3 8L10.2 6.5L11.6 7.8V9.600Z" fill="#a074c4"/><circle cx="10" cy="4.900" r="0.650" fill="#a074c4"/></svg>
<svg style="left:67.5px;top:251.5px" width="13" height="11" viewBox="0 0 13 11" ><path d="M0.85 7.25V1H9.5" fill="none" stroke="#a074c4" stroke-width="1"/><rect x="3" y="3.2" width="9" height="6.8" fill="none" stroke="#a074c4" stroke-width="1"/><path d="M3.4 9.6V8.3L6.1 5.8L8.3 8L10.2 6.5L11.6 7.8V9.600Z" fill="#a074c4"/><circle cx="10" cy="4.900" r="0.650" fill="#a074c4"/></svg>
<svg style="left:68.5px;top:186.5px" width="11" height="9" viewBox="0 0 11 9" ><path d="M4 1L0.9 4.600L4 8.200M7 1L10.1 4.600L7 8.200" fill="none" stroke="#d4722f" stroke-width="1.3"/></svg>
<svg style="left:60.5px;top:296.5px" width="11" height="9" viewBox="0 0 11 9" ><path d="M4 1L0.9 4.600L4 8.200M7 1L10.1 4.600L7 8.200" fill="none" stroke="#d4722f" stroke-width="1.3"/></svg>
<svg style="left:448.5px;top:48.5px" width="9" height="9" viewBox="0 0 9 9" ><path d="M0.4 0.4L8.6 8.6M8.6 0.4L0.4 8.6" stroke="#333" stroke-width="1.05"/></svg>
<svg style="left:424.5px;top:76.5px" width="6" height="9" viewBox="0 0 6 9" ><path d="M0.6 0.5L4.8 4.5L0.6 8.5" fill="none" stroke="#6a6a6a" stroke-width="1"/></svg>
<svg style="left:1310px;top:46px" width="14" height="14" viewBox="0 0 14 14" ><rect x="0.5" y="0.5" width="13" height="13" rx="2" fill="none" stroke="#424242" stroke-width="1"/><path d="M7 0.500V13.500" stroke="#424242" stroke-width="1.200"/></svg>
<svg style="left:1337.8px;top:51.1px" width="11" height="3" viewBox="0 0 11 3" ><circle cx="1.2" cy="1.5" r="1" fill="#424242"/><circle cx="5.3" cy="1.5" r="1" fill="#424242"/><circle cx="9.4" cy="1.5" r="1" fill="#424242"/></svg>
<svg style="left:0;top:0" width="140" height="728" viewBox="0 0 140 728"><path d="M11.2 714.7L15.7 719L11.2 723.4M21.1 710.7L17 715L21.100 719.2" fill="none" stroke="#fff" stroke-width="1.4"/><circle cx="48.1" cy="717" r="6.2" fill="none" stroke="#fff" stroke-width="1.3"/><path d="M45.3 714.2L50.9 719.8M50.9 714.2L45.3 719.8" fill="none" stroke="#fff" stroke-width="1.3"/><path d="M77.3 711L83.800 722H70.800Z" fill="none" stroke="#fff" stroke-width="1.3" stroke-linejoin="round"/><path d="M77.3 714.600V718.700M77.3 719.600V720.900" fill="none" stroke="#fff" stroke-width="1.3"/><path d="M115.3 716.4V711.700L124.600 716.900L119.600 720.500" fill="none" stroke="#fff" stroke-width="1.3" stroke-linejoin="round"/><path d="M112.400 720.600Q112.400 718 114.700 718Q117 718 117 720.600V721.600Q117 724.200 114.700 724.200Q112.400 724.200 112.400 721.600Z" fill="none" stroke="#fff" stroke-width="1.100"/><path d="M112.400 720H117M110.500 718L112.400 719.300M118.900 718L117 719.300M110.200 721.300H112.400M119.200 721.300H117M110.500 724.600L112.600 723.100M118.900 724.600L116.800 723.100" fill="none" stroke="#fff" stroke-width="0.900"/></svg>
<svg style="left:0;top:0" width="1366" height="728" viewBox="0 0 1366 728"><g transform="translate(1235 710.2)"><rect x="1.700" y="0.200" width="6.800" height="7" rx="2.700" fill="#fff"/><rect x="8.700" y="0.200" width="6.800" height="7" rx="2.700" fill="#fff"/><rect x="1.200" y="4.400" width="14.800" height="9.500" rx="4.200" fill="#fff"/><rect x="0" y="6.600" width="17.200" height="4.400" rx="1.400" fill="#fff"/><rect x="3.500" y="1.900" width="3.500" height="3.200" rx="1.400" fill="#007acc"/><rect x="10.200" y="1.900" width="3.500" height="3.200" rx="1.400" fill="#007acc"/><rect x="3.500" y="7.500" width="10.200" height="4.700" rx="2.100" fill="#007acc"/><rect x="6" y="8.500" width="1.400" height="2.700" rx="0.500" fill="#fff"/><rect x="9.800" y="8.500" width="1.400" height="2.700" rx="0.500" fill="#fff"/></g><circle cx="1275.4" cy="717.1" r="1.450" fill="#fff"/><path d="M1270.28 712.33A7 7 0 0 0 1270.28 721.87M1280.52 712.33A7 7 0 0 1 1280.52 721.87M1272.57 714.27A4 4 0 0 0 1272.57 719.93M1278.23 714.27A4 4 0 0 1 1278.23 719.93" fill="none" stroke="#fff" stroke-width="1.250"/><path d="M1350.25 711Q1346.400 711 1346.400 715.200V718.600L1344.700 720.900H1355.800L1354.100 718.600V715.200Q1354.100 711 1350.250 711ZM1348.700 721.100Q1348.700 723.200 1350.250 723.200Q1351.800 723.200 1351.800 721.100" fill="none" stroke="#fff" stroke-width="1.250" stroke-linejoin="round"/></svg>
<span class="t" style="left:43.3px;top:9.00px;font-size:13px;color:#333333;letter-spacing:-0.513px;">File</span>
<span class="t" style="left:79.1px;top:9.00px;font-size:13px;color:#333333;letter-spacing:-0.377px;">Edit</span>
<span class="t" style="left:116.5px;top:9.00px;font-size:13px;color:#333333;letter-spacing:-0.198px;">Selection</span>
<span class="t" style="left:184.7px;top:9.00px;font-size:13px;color:#333333;letter-spacing:-0.163px;">View</span>
<span class="t" style="left:228px;top:9.00px;font-size:13px;color:#333333;letter-spacing:-0.672px;">Go</span>
<span class="t" style="left:260.8px;top:9.00px;font-size:13px;color:#333333;letter-spacing:-0.820px;">Run</span>
<span class="t" style="left:639.7px;top:9.00px;font-size:13px;color:#333333;letter-spacing:-0.401px;">logica-js-projeto_inicial</span>
<span class="t" style="left:68.2px;top:43.00px;font-size:10.6px;color:#616161;letter-spacing:-1.013px;">EXPLORER</span>
<span class="t" style="left:68.2px;top:71.00px;font-size:10.6px;color:#3b3b3b;font-weight:700;letter-spacing:-0.204px;">LOGICA-JS-PROJETO_INICIAL</span>
<span class="t" style="left:78.3px;top:93.60px;font-size:13.5px;color:#444444;letter-spacing:-0.089px;">img</span>
<span class="t" style="left:86.2px;top:115.60px;font-size:13.5px;color:#444444;letter-spacing:-0.877px;">JS Game_files</span>
<span class="t" style="left:86.2px;top:137.60px;font-size:13.5px;color:#444444;letter-spacing:-0.183px;">bg.png</span>
<span class="t" style="left:86.2px;top:159.60px;font-size:13.5px;color:#444444;letter-spacing:-0.295px;">code.png</span>
<span class="t" style="left:86.2px;top:181.60px;font-size:13.5px;color:#444444;letter-spacing:-0.686px;">JS Game.html</span>
<span class="t" style="left:86.2px;top:203.60px;font-size:13.5px;color:#444444;letter-spacing:-0.061px;">robot.png</span>
<span class="t" style="left:86.2px;top:225.60px;font-size:13.5px;color:#444444;letter-spacing:-0.340px;">Ruido.png</span>
<span class="t" style="left:86.2px;top:247.60px;font-size:13.5px;color:#444444;letter-spacing:0.020px;">trophy.png</span>
<span class="t" style="left:78.3px;top:269.60px;font-size:13.5px;color:#444444;letter-spacing:-0.455px;">app.js</span>
<span class="t" style="left:78.3px;top:291.60px;font-size:13.5px;color:#444444;letter-spacing:-0.203px;">index.html</span>
<span class="t" style="left:78.3px;top:313.60px;font-size:13.5px;color:#444444;letter-spacing:-0.663px;">style.css</span>
<span class="t" style="left:68.2px;top:664.00px;font-size:10.6px;color:#3b3b3b;font-weight:700;">OUTLINE</span>
<span class="t" style="left:68.2px;top:686.00px;font-size:10.6px;color:#3b3b3b;font-weight:700;">TIMELINE</span>
<span class="t" style="left:380.2px;top:44.00px;font-size:13px;color:#333333;letter-spacing:-0.251px;">app.js</span>
<span class="t" style="left:386px;top:72.00px;font-size:13px;color:#6f6f6f;letter-spacing:-0.317px;">app.js</span>
<span class="t" style="left:435.6px;top:72.00px;font-size:13px;color:#6f6f6f;letter-spacing:-0.448px;">...</span>
<span class="t" style="left:59.7px;top:708.00px;font-size:12px;color:#ffffff;">0</span>
<span class="t" style="left:89px;top:708.00px;font-size:12px;color:#ffffff;">0</span>
<span class="t" style="left:913.6px;top:708.00px;font-size:12px;color:#ffffff;letter-spacing:-0.327px;">Ln 21, Col 2</span>
<span class="t" style="left:990.8px;top:708.00px;font-size:12px;color:#ffffff;letter-spacing:-0.553px;">Spaces: 4</span>
<span class="t" style="left:1055.6px;top:708.00px;font-size:12px;color:#ffffff;letter-spacing:-0.520px;">UTF-8</span>
<span class="t" style="left:1103.3px;top:708.00px;font-size:12px;color:#ffffff;letter-spacing:-1.536px;">CRLF</span>
<span class="t" style="left:1146.8px;top:707.40px;font-size:13px;color:#ffffff;letter-spacing:0.568px;">{ }</span>
<span class="t" style="left:1167.5px;top:708.00px;font-size:12px;color:#ffffff;letter-spacing:-0.423px;">JavaScript</span>
<span class="t" style="left:1287.4px;top:708.00px;font-size:12px;color:#ffffff;letter-spacing:-0.394px;">Go Live</span>
<span class="t" style="left:88.4px;top:738.60px;font-size:15.4px;color:#333333;letter-spacing:-0.873px;">Pesquisar</span>
<span class="t" style="left:1265px;top:728.60px;font-size:12.3px;color:#ffffff;letter-spacing:-0.976px;">17:15</span>
<span class="t" style="left:1250px;top:747.00px;font-size:12.3px;color:#ffffff;letter-spacing:-0.455px;">13/01/2026</span>
<span class="t" style="left:362.8px;top:42.50px;font-size:10.2px;color:#b3b135;font-weight:700;transform:scaleX(0.8);transform-origin:0 50%;-webkit-text-stroke:0.3px #b3b135;">JS</span>
<span class="t" style="left:368.7px;top:72.20px;font-size:10.2px;color:#b3b135;font-weight:700;transform:scaleX(0.8);transform-origin:0 50%;-webkit-text-stroke:0.3px #b3b135;">JS</span>
<span class="t" style="left:60.6px;top:270.40px;font-size:10.2px;color:#b3b135;font-weight:700;transform:scaleX(0.8);transform-origin:0 50%;-webkit-text-stroke:0.3px #b3b135;">JS</span>
<span class="t" style="left:61px;top:313.00px;font-size:12.5px;color:#4f93b3;font-weight:700;transform:scaleX(1.3);transform-origin:0 50%;">#</span>
<span class="t" style="left:1337.3px;top:745.50px;font-size:11.5px;color:#ffffff;">1</span>
</body>
</html>
